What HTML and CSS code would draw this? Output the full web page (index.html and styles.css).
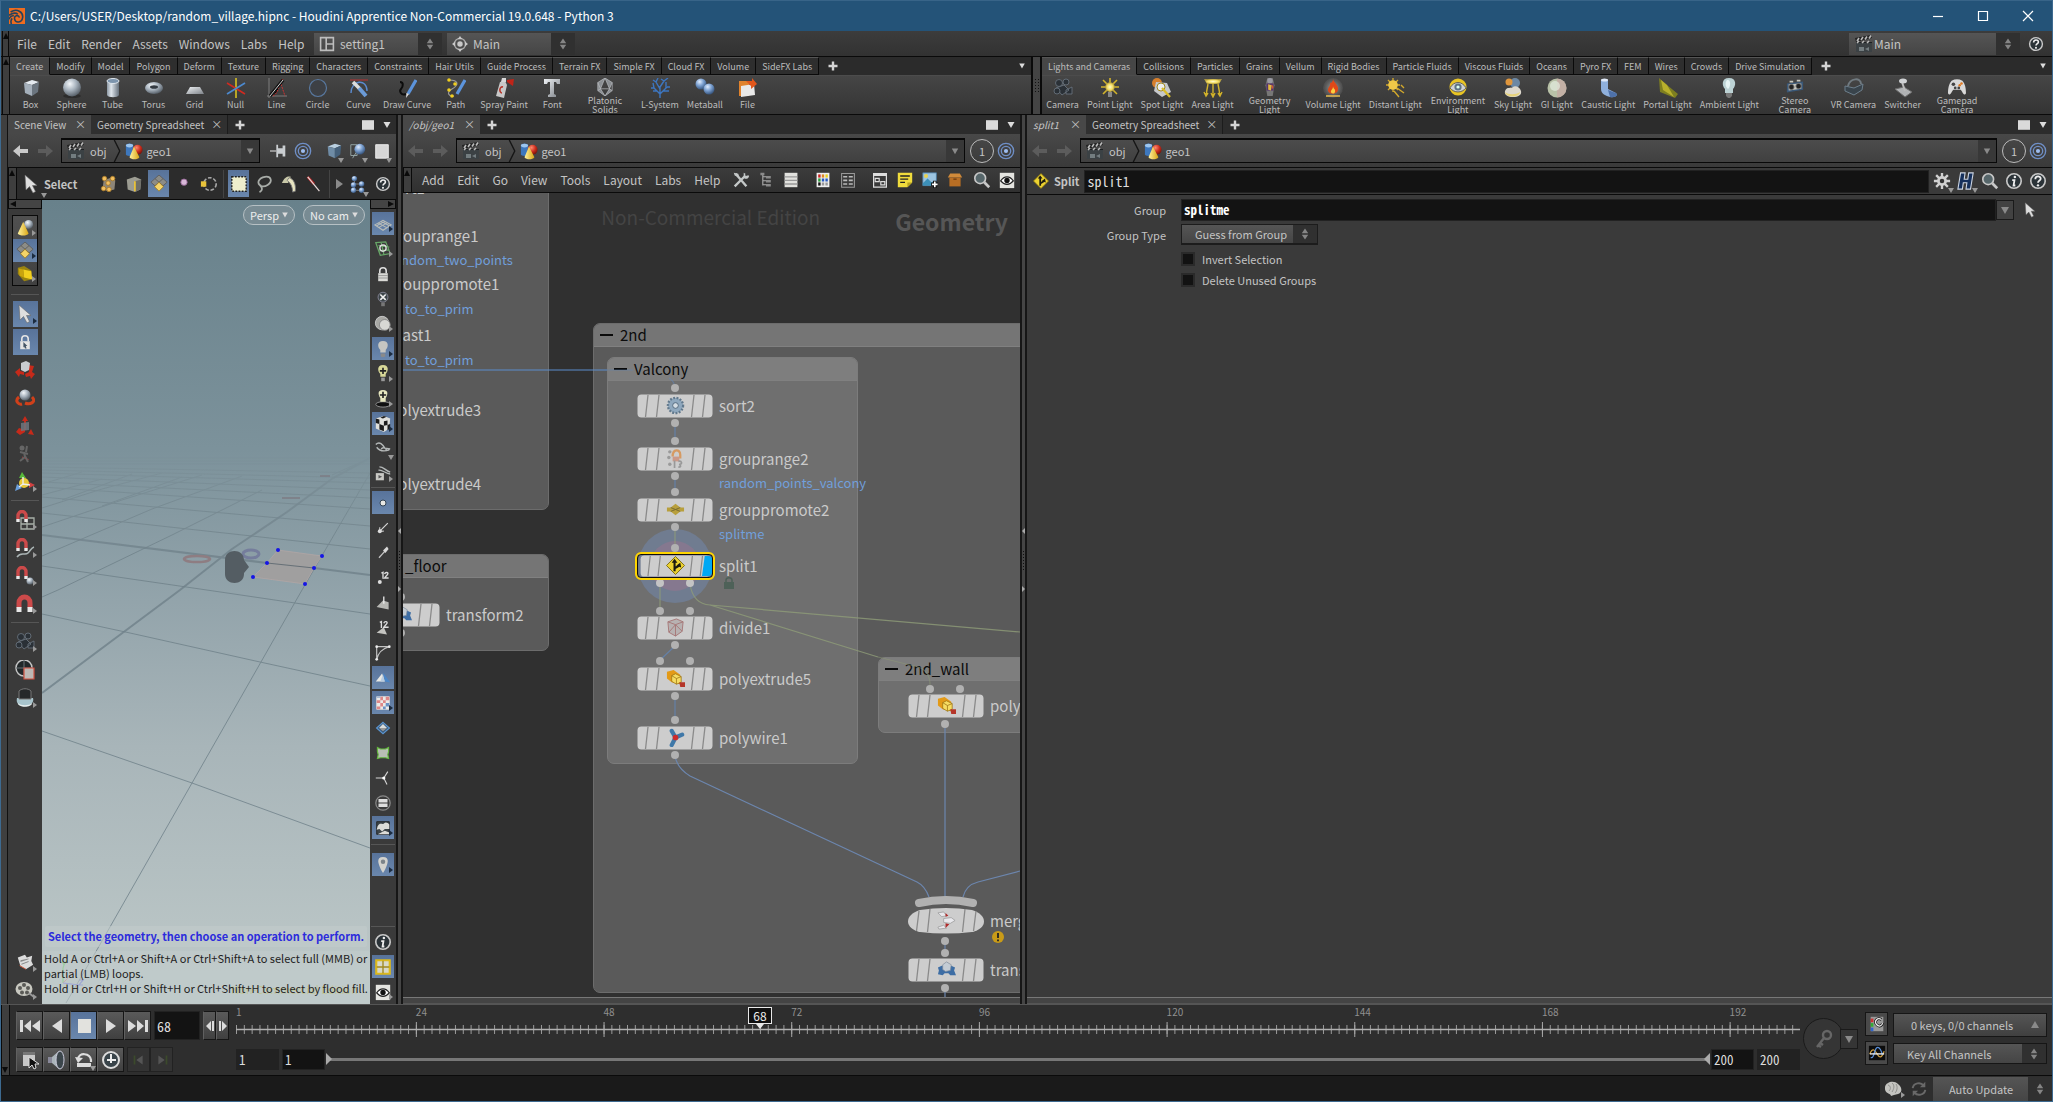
FILE: index.html
```html
<!DOCTYPE html>
<html lang="en">
<head>
<meta charset="utf-8">
<title>C:/Users/USER/Desktop/random_village.hipnc - Houdini Apprentice</title>
<link rel="stylesheet" href="styles.css">
</head>
<body>
<svg class="sprite" width="0" height="0" aria-hidden="true">
<defs>
<linearGradient id="gGrey" x1="0" y1="0" x2="1" y2="1"><stop offset="0" stop-color="#eef1f4"/><stop offset="1" stop-color="#7d8288"/></linearGradient>
<linearGradient id="gSteel" x1="0" y1="0" x2="1" y2="0"><stop offset="0" stop-color="#8b97a3"/><stop offset=".35" stop-color="#dfe6ec"/><stop offset="1" stop-color="#66717c"/></linearGradient>
<radialGradient id="gBall" cx=".38" cy=".3" r=".7"><stop offset="0" stop-color="#f4f8fb"/><stop offset=".5" stop-color="#a9b4bf"/><stop offset="1" stop-color="#5a636c"/></radialGradient>
<radialGradient id="gBlue" cx=".38" cy=".3" r=".7"><stop offset="0" stop-color="#e2eeff"/><stop offset=".5" stop-color="#7ba0d0"/><stop offset="1" stop-color="#38567f"/></radialGradient>
<radialGradient id="gRed" cx=".38" cy=".3" r=".7"><stop offset="0" stop-color="#ff8a70"/><stop offset=".6" stop-color="#c92c1c"/><stop offset="1" stop-color="#7c150c"/></radialGradient>
<linearGradient id="gYel" x1="0" y1="0" x2="1" y2="0"><stop offset="0" stop-color="#fff3a0"/><stop offset="1" stop-color="#d9a514"/></linearGradient>
<radialGradient id="gGlow"><stop offset="0" stop-color="#fffbd0"/><stop offset=".6" stop-color="#f3dd62"/><stop offset="1" stop-color="#a8923c"/></radialGradient>
<radialGradient id="gHalo"><stop offset="0" stop-color="#ddd" stop-opacity=".7"/><stop offset="1" stop-color="#888" stop-opacity=".15"/></radialGradient>
<linearGradient id="gFade" x1="0" y1="0" x2="0" y2="1"><stop offset="0" stop-color="#fff" stop-opacity="0"/><stop offset=".1" stop-color="#fff" stop-opacity=".7"/><stop offset=".2" stop-color="#fff"/></linearGradient>
</defs>

<symbol id="logo" viewBox="0 0 20 20"><path fill="#ef6c1f" d="M0 0h20v20H0z"/><path fill="none" stroke="#26425c" stroke-width="2" d="M2 5c8-5 16 0 15 7s-9 7-10 2 5-6 6-2M0 9c5-3 9-3 11-1M0 14c1-3 4-5 6-4M3 20c-1-3-1-5 1-7"/></symbol>
<symbol id="updown" viewBox="0 0 10 18"><path fill="#858585" d="M5 2l4 6H1zM5 16l4-6H1z"/></symbol>
<symbol id="layout" viewBox="0 0 20 20"><path fill="none" stroke="#bdbdbd" stroke-width="2" d="M2 2h16v16H2zM9 2v16M9 10h9"/></symbol>
<symbol id="radial" viewBox="0 0 20 20"><circle cx="10" cy="10" r="7" fill="none" stroke="#aaa" stroke-width="1.6"/><circle cx="10" cy="10" r="3.4" fill="#c8c8c8"/><path fill="#c8c8c8" d="M10 0l3 4H7zM10 20l3-4H7zM0 10l4-3v6zM20 10l-4-3v6z"/></symbol>
<symbol id="clap" viewBox="0 0 20 20"><path fill="#1d2022" d="M2 8h16v10H2z"/><path fill="#3b4144" d="M2 9h16v9H2z"/><path fill="#222" d="M1 4l16-3 1 3L2 8z"/><path stroke="#bbb" stroke-width="1.6" d="M3 7l2-3M7 6l2-3M11 5.500l2-3M15 4.500l2-3M3 9l2-2M8 9l2-2M13 9l2-2"/><path fill="#737d80" d="M5 13h5v4H5zM11 15l4-2v4z"/></symbol>
<symbol id="help" viewBox="0 0 20 20"><circle cx="10" cy="10" r="8" fill="#2b3338" stroke="#c9c9c9" stroke-width="1.800"/><path fill="none" stroke="#eee" stroke-width="2" d="M7 8c0-4 6-4 6-.5 0 2-3 2-3 4.500"/><circle cx="10" cy="14.800" r="1.300" fill="#eee"/></symbol>
<symbol id="info" viewBox="0 0 20 20"><circle cx="10" cy="10" r="8" fill="#2b3338" stroke="#c9c9c9" stroke-width="1.800"/><circle cx="11" cy="5.500" r="1.400" fill="#eee"/><path fill="none" stroke="#eee" stroke-width="2" d="M8 9h2.500l-1 6h2"/></symbol>
<symbol id="plus" viewBox="0 0 10 10"><path stroke="#d4d4d4" stroke-width="2.400" d="M5 .5v9M.5 5h9"/></symbol>
<symbol id="down" viewBox="0 0 10 10"><path fill="#dcdcdc" d="M1.500 2h7L5 8z"/></symbol>
<symbol id="downdim" viewBox="0 0 10 10"><path fill="#8a8a8a" d="M1 2h8L5 9z"/></symbol>
<symbol id="sq" viewBox="0 0 10 10"><path fill="#dadada" d="M0 1h10v8H0z"/></symbol>
<symbol id="bigsq" viewBox="0 0 20 20"><path fill="#d6d6d6" stroke="#f0f0f0" d="M3 3h14v15H3z"/></symbol>
<symbol id="back" viewBox="0 0 20 20"><path fill="#c9c9c9" d="M2 10l7-6v4h8v4H9v4z"/></symbol>
<symbol id="backdim" viewBox="0 0 20 20"><path fill="#5c5c5c" d="M2 10l7-6v4h8v4H9v4z"/></symbol>
<symbol id="fwddim" viewBox="0 0 20 20"><path fill="#5c5c5c" d="M18 10l-7-6v4H3v4h8v4z"/></symbol>
<symbol id="chev" viewBox="0 0 8 24"><path fill="none" stroke="#151515" stroke-width="1.500" d="M1 0l6 12-6 12"/></symbol>
<symbol id="geo" viewBox="0 0 20 20"><path fill="#3e78bd" d="M1 4c0-3 8-3 8 0v10c0 2-8 2-8 0z"/><ellipse cx="5" cy="4" rx="4" ry="2" fill="#9cc5ee"/><circle cx="14" cy="8.500" r="5.500" fill="url(#gRed)"/><path fill="url(#gYel)" d="M10 5l6 12c-2 3-9 3-11 0z"/></symbol>
<symbol id="pin" viewBox="0 0 20 20"><path stroke="#c4c4c4" stroke-width="1.400" d="M0 10h7"/><path fill="#c9cdd0" d="M7 3h2v4h5V4h3v12h-3v-3H9v4H7z"/></symbol>
<symbol id="target" viewBox="0 0 20 20"><g fill="none" stroke="#6f8fc6" stroke-width="1.500"><circle cx="10" cy="10" r="8.500"/><circle cx="10" cy="10" r="5.200"/></g><circle cx="10" cy="10" r="2.300" fill="#9dbdf0"/></symbol>
<symbol id="cube" viewBox="0 0 20 20"><path fill="#e4eaf0" d="M3 5l8-3 7 2-7 3z"/><path fill="#a4afba" d="M3 5l8 2v11l-7-3z"/><path fill="#6b757f" d="M11 7l7-3-1 10-6 4z"/></symbol>
<symbol id="cubeblue" viewBox="0 0 20 20"><path fill="#b9cfe0" d="M3 5l8-3 7 2-7 3z"/><path fill="#6f8ca6" d="M3 5l8 2v11l-7-3z"/><path fill="#45607a" d="M11 7l7-3-1 10-6 4z"/></symbol>
<symbol id="balls" viewBox="0 0 20 20"><path fill="none" stroke="#9aa" d="M2 3h7v12H2zM4 18l5-8"/><circle cx="12" cy="8" r="6" fill="url(#gBlue)"/></symbol>
<symbol id="cursor" viewBox="0 0 20 20"><path fill="#dedede" stroke="#666" stroke-width=".6" d="M4 1l1 15 3.500-3.500L12 19l2.500-1.500-3-6H16z"/></symbol>
<symbol id="points" viewBox="0 0 20 20"><path fill="#8d8578" d="M4 6l8-3 5 3-1 10-8 2-5-3z"/><g fill="#f3c060" stroke="#a87a2a"><circle cx="5" cy="4" r="2.500"/><circle cx="14" cy="4" r="2.500"/><circle cx="9" cy="9" r="2.500"/><circle cx="4" cy="15" r="2.500"/><circle cx="10" cy="16" r="2.500"/></g></symbol>
<symbol id="edges" viewBox="0 0 20 20"><path fill="#9c9c92" d="M2 5l9-3 7 3-1 11-6 3-8-3z"/><path fill="#6f6f6a" d="M11 7l7-2-1 11-6 3z"/><path stroke="#e8c23a" stroke-width="2" d="M11 7v11"/></symbol>
<symbol id="prims" viewBox="0 0 20 20"><path fill="#8c8c86" stroke="#5c5c5c" d="M10 0l9 8-9 8-9-8zM5.500 4l9 8M14.500 4l-9 8"/><path fill="#f5d468" stroke="#9a7a28" d="M10 8l5 5-5 5-5-5z"/></symbol>
<symbol id="vert" viewBox="0 0 20 20"><circle cx="10" cy="8" r="3.500" fill="#d8b8d8" stroke="#9a6a9a"/></symbol>
<symbol id="detail" viewBox="0 0 20 20"><circle cx="11" cy="10" r="7" fill="none" stroke="#a8a8a8" stroke-width="1.800" stroke-dasharray="4 2"/><path fill="#e8c23a" d="M1 7h6v6H1z"/></symbol>
<symbol id="boxsel" viewBox="0 0 20 20"><path fill="#eeeecc" stroke="#222" stroke-width="1.600" stroke-dasharray="2 1.500" d="M2 2h16v16H2z"/></symbol>
<symbol id="lasso" viewBox="0 0 20 20"><path fill="none" stroke="#a8aca8" stroke-width="2" d="M7 12C1 10 4 3 11 2s9 5 3 9-10-1-8 1 3 5-1 7"/></symbol>
<symbol id="brush" viewBox="0 0 20 20"><path fill="#c8c8a8" d="M2 9C5 2 9 1 12 2l-3 7z"/><path fill="#e8e4c0" stroke="#777" d="M10 3c5 1 8 7 7 15l-3 1c0-6-2-10-6-13z"/></symbol>
<symbol id="laser" viewBox="0 0 20 20"><path stroke="#a22" stroke-width="3" d="M3 2l7 8"/><path stroke="#e6d8d8" stroke-width="1.400" d="M3 2l13 16"/></symbol>
<symbol id="tri" viewBox="0 0 10 10"><path fill="#8a8a8a" d="M2 0l7 5-7 5z"/></symbol>
<symbol id="hier" viewBox="0 0 20 20"><path fill="none" stroke="#888" d="M6 5v12M6 10h8M6 17h8"/><g fill="url(#gBlue)"><circle cx="6" cy="4" r="3"/><circle cx="5" cy="11" r="3"/><circle cx="14" cy="10" r="3"/><circle cx="5" cy="17" r="3"/><circle cx="14" cy="17" r="3"/></g></symbol>

<symbol id="s-sphere" viewBox="0 0 20 20"><ellipse cx="10" cy="18" rx="9" ry="2" fill="#222" opacity=".6"/><circle cx="10" cy="9.500" r="9" fill="url(#gBall)"/></symbol>
<symbol id="s-tube" viewBox="0 0 20 20"><path fill="url(#gSteel)" d="M4 3h12v14c-1 3-11 3-12 0z"/><ellipse cx="10" cy="3" rx="6" ry="2.500" fill="#7d95ad" stroke="#dfe6ec"/></symbol>
<symbol id="s-torus" viewBox="0 0 20 20"><ellipse cx="10" cy="10" rx="9" ry="6" fill="url(#gBall)"/><ellipse cx="10" cy="9" rx="4" ry="1.800" fill="#333a42"/></symbol>
<symbol id="s-grid" viewBox="0 0 20 20"><path fill="url(#gGrey)" d="M5 9h10l4 7H1z"/></symbol>
<symbol id="s-null" viewBox="0 0 20 20"><path stroke="#d8c020" stroke-width="1.600" d="M10 0v20"/><path stroke="#d02a20" stroke-width="1.600" d="M1 5l18 11"/><path stroke="#4c8ad0" stroke-width="1.600" d="M1 16L19 5"/></symbol>
<symbol id="s-line" viewBox="0 0 20 20"><path stroke="#999" stroke-width=".7" d="M2 0v20M0 18h20"/><path stroke="#c33" stroke-dasharray="2 1" d="M6 18c5-3 5-8 10-17M14 6l4 12"/><path stroke="#111" stroke-width="3.400" d="M3 18L16 2"/><path stroke="#ccc" d="M3 18L16 2"/></symbol>
<symbol id="s-circle" viewBox="0 0 20 20"><circle cx="10" cy="10" r="8.500" fill="#3d4045" stroke="#58789f" stroke-width="1.200"/></symbol>
<symbol id="s-curve" viewBox="0 0 20 20"><path fill="none" stroke="#5b8bd0" stroke-width="1.400" d="M2 15C2 2 18 0 18 13"/><path stroke="#b33" d="M1 2h18"/><path stroke="#ddd" stroke-width="3.600" d="M4 4l7 7"/><path stroke="#6b9bd8" stroke-width="4" d="M10 10l7 8"/></symbol>
<symbol id="s-draw" viewBox="0 0 20 20"><path fill="none" stroke="#0c0c0c" stroke-width="2" d="M3 4c4 0 3 5 1 7s0 7 5 5"/><path stroke="#5c94dc" stroke-width="3.200" d="M19 2l-8 14"/><path fill="#ddd" d="M9.500 15l2.500 1-3 4z"/></symbol>
<symbol id="s-path" viewBox="0 0 20 20"><path fill="none" stroke="#999" stroke-width="1.200" d="M3 2c10 0 10 5 3 9s-2 8 2 7"/><path stroke="#5c94dc" stroke-width="3.200" d="M19 2l-8 14"/><g fill="#f0ce20"><circle cx="3" cy="2" r="1.800"/><circle cx="9" cy="6" r="1.800"/><circle cx="3" cy="12" r="1.800"/><circle cx="6" cy="18" r="1.800"/></g></symbol>
<symbol id="s-spray" viewBox="0 0 20 20"><path fill="#c8c8c8" d="M6 4l5-1 2 4-3 13-8-2z"/><path fill="none" stroke="#b8382c" stroke-width="1.600" d="M9 9c-4-1-4 6-1 6"/><path fill="#d8d8d8" d="M8 0h4v4H7z"/><path fill="#c02418" d="M13 2l7-1-1 7-6-4z"/></symbol>
<symbol id="s-font" viewBox="0 0 20 20"><path fill="url(#gGrey)" d="M2 1h16v5h-3l-1-2h-2v12l2 1v2H6v-2l2-1V4H6L5 6H2z"/></symbol>
<symbol id="s-plato" viewBox="0 0 20 20"><path fill="#8a8e92" stroke="#b6babd" stroke-width=".8" d="M10 0l8 5v9l-8 6-8-6V5zM10 0L5 12h10zM2 5l3 7-3 2M18 5l-3 7 3 2M5 12l5 8 5-8"/></symbol>
<symbol id="s-lsys" viewBox="0 0 20 20"><path fill="none" stroke="#3d76c0" stroke-width="1.400" d="M10 20V8M10 16L4 10M10 16l7-7M10 11L6 4M10 9l4-6M4 10H1M4 10L3 5M17 9h3M16 10V4M6 4L3 2M6 4l2-4M14 3l4-3M14 3l-3-2M7 13H3M13 13h6"/></symbol>
<symbol id="s-meta" viewBox="0 0 20 20"><circle cx="6" cy="6" r="5.500" fill="url(#gBlue)"/><circle cx="14" cy="11" r="5.500" fill="url(#gBlue)"/></symbol>
<symbol id="s-file" viewBox="0 0 20 20"><path fill="#e0822c" d="M2 3h8l2 2v13H2z"/><path fill="#e8e8e8" d="M4 8l13-2 1 11-14 2z"/><path fill="#e2571c" d="M9 3l6 0V0l5 6-6 5V8z"/></symbol>
<symbol id="l-cam" viewBox="0 0 20 20"><g fill="#2a3036" stroke="#66707a" stroke-width=".9"><circle cx="6" cy="5" r="3.500"/><circle cx="13" cy="4" r="3"/><path d="M3 10l8-3 5 5-7 5zM13 12l6-3v7l-6 0z"/><circle cx="4" cy="13" r="3"/></g></symbol>
<symbol id="l-point" viewBox="0 0 20 20"><path stroke="#d2b32c" stroke-width="1.600" d="M10 0v19M1 9h18M3 2l14 14M17 2L3 16"/><circle cx="10" cy="9" r="4.800" fill="url(#gGlow)"/><path fill="#888" d="M8 14h4v5H8z"/></symbol>
<symbol id="l-spot" viewBox="0 0 20 20"><circle cx="5" cy="5" r="5" fill="#d77f2c"/><path fill="#c6c8ca" d="M4 4l11 1 4 9-9 5-8-6z"/><circle cx="9" cy="9" r="4" fill="#eee" stroke="#a08820"/><path stroke="#d9bc28" stroke-width="2.200" d="M10 10l8 9"/></symbol>
<symbol id="l-area" viewBox="0 0 20 20"><path fill="url(#gGlow)" d="M1 1h18l-3 5H4z"/><path stroke="#d2b32c" stroke-width="1.400" d="M5 6L3 17M10 6v12M15 6l2 11M1 14l2 4 2-3M8 15l2 4 2-4M15 15l2 3 2-4"/></symbol>
<symbol id="l-geo" viewBox="0 0 20 20"><path fill="#777" d="M7 0h6l2 8-2 12H7L5 8z"/><circle cx="10" cy="3" r="3" fill="#9a9aa4"/><path fill="#54346c" d="M6 6h8v8H6z"/><path fill="#e0b840" d="M8 7l4 1-1 6-3-1z"/><path fill="#cc5a30" d="M12 7l2 3-2 3z"/></symbol>
<symbol id="l-vol" viewBox="0 0 20 20"><circle cx="10" cy="10" r="10" fill="url(#gHalo)"/><path fill="#e04818" d="M10 1c1 4 6 6 5 11s-10 5-10 0c0-3 3-4 2-7 2 0 3-2 3-4z"/><path fill="#f8d040" d="M10 8c0 3 3 3 2 6s-5 1-4-1 2-2 2-5z"/><path stroke="#e8bc50" stroke-width="1.500" d="M3 18h14"/></symbol>
<symbol id="l-dist" viewBox="0 0 20 20"><path stroke="#d2a82c" stroke-width="1.400" d="M8 0v14M1 7h14M3 2l10 10M13 2L3 12M12 10l7 5M9 13l5 6M16 7l3 3"/><circle cx="8" cy="7" r="4.800" fill="#f0c848"/></symbol>
<symbol id="l-env" viewBox="0 0 20 20"><circle cx="10" cy="10" r="9.500" fill="#e8c424"/><path fill="#cfd2d4" stroke="#555" d="M1 11c5-8 13-8 18 0-5 6-13 6-18 0z"/><circle cx="10" cy="10" r="4" fill="#5e7484"/><circle cx="10" cy="10" r="1.800" fill="#dfe"/></symbol>
<symbol id="l-sky" viewBox="0 0 20 20"><circle cx="12" cy="5" r="5" fill="#6c88a4"/><circle cx="6" cy="4" r="3.500" fill="#e0963c"/><path fill="#ddd8cc" d="M2 13c2-5 6-2 8-4s7 0 8 4-3 6-8 6-9-2-8-6z"/><path fill="#e6d27a" d="M2 14c3 3 11 3 15 0-1 6-14 6-15 0z"/></symbol>
<symbol id="l-gi" viewBox="0 0 20 20"><circle cx="10" cy="10" r="9.500" fill="#b9c2a8"/><path fill="#c8a8a4" opacity=".7" d="M10 .5a9.500 9.500 0 010 19z"/><circle cx="8" cy="8" r="5" fill="#e4ece0" opacity=".7"/></symbol>
<symbol id="l-caus" viewBox="0 0 20 20"><path fill="#8fb0dc" d="M3 2h7v9l8 4c3 3-2 5-6 4S3 16 3 11z"/><ellipse cx="6.500" cy="2" rx="3.500" ry="1.500" fill="#dfe9f8"/><path fill="#3d629c" opacity=".8" d="M10 12l8 3c3 3-2 5-6 4z"/></symbol>
<symbol id="l-port" viewBox="0 0 20 20"><path fill="#7d7e20" d="M1 0l8 7 11 9-3 4L2 14z"/><path fill="#b8b02c" d="M3 2l6 5 7 12-11-7z"/></symbol>
<symbol id="l-amb" viewBox="0 0 20 20"><path fill="#bcd2d4" d="M10 0c8 0 7 8 4 11v4H6v-4C3 8 2 0 10 0z"/><path fill="#e6f4f4" d="M8 2c4-1 4 6 1 9-3-2-3-7-1-9z"/><path fill="#777" d="M7 15h6v3l-2 2H9l-2-2z"/></symbol>
<symbol id="l-ster" viewBox="0 0 20 20"><path fill="#3a5878" d="M1 6l18-2v9L1 16z"/><path fill="#c8c8c0" d="M3 7l14-1v6L3 14zM4 3h4v2H4zM12 2h4v2h-4z"/><g fill="#222" stroke="#777"><circle cx="6" cy="10" r="3"/><circle cx="14" cy="9" r="3"/></g></symbol>
<symbol id="l-vr" viewBox="0 0 20 20"><path fill="none" stroke="#707a80" stroke-width="2" d="M4 8c2-8 13-9 13-2"/><path fill="#39444c" stroke="#6d7f8c" d="M1 8l9 2 9-4-1 6-8 5-9-4z"/></symbol>
<symbol id="l-switch" viewBox="0 0 20 20"><path fill="#b0b2b4" stroke="#6a6a6a" d="M2 11l9-2 8 5-7 5z"/><path stroke="#bbb" stroke-width="2" d="M12 13L9 4"/><ellipse cx="10" cy="3" rx="4" ry="2.500" fill="#d0d2d4"/></symbol>
<symbol id="l-pad" viewBox="0 0 20 20"><path fill="#d9d9d9" d="M4 3c4-2 8-2 12 0 3 3 4 9 4 14-2 4-4-2-6-4H6c-2 2-4 8-6 4C0 12 1 6 4 3z"/><g fill="#444"><circle cx="6" cy="7" r="2"/><circle cx="12" cy="11" r="1.500"/><circle cx="8" cy="11" r="1.500"/></g><circle cx="15" cy="6" r="1.400" fill="#e07820"/><circle cx="13" cy="8" r="1.400" fill="#e07820"/></symbol>

<symbol id="conecube" viewBox="0 0 20 20"><circle cx="14" cy="6" r="5" fill="url(#gBall)"/><path fill="url(#gYel)" d="M8 3l6 13c-2 3-10 3-12 0z"/></symbol>
<symbol id="goldcube" viewBox="0 0 20 20"><path fill="#9a8410" d="M2 3l7-2 8 5v10l-8 2-7-8z"/><path fill="#f1cf1e" d="M8 5l9 2 1 9-9-2z"/><path fill="#c9a40e" d="M8 5l1 9-5-2L3 4z"/></symbol>
<symbol id="lockarrow" viewBox="0 0 20 20"><path fill="none" stroke="#e4e4e4" stroke-width="2" d="M6 9V6c0-5 8-5 8 0v3"/><path fill="#e4e4e4" d="M4 9h12v10H4z"/><path fill="#456" d="M8 10l5 5-2 0 1 3-2 0-1-2-1 1z"/></symbol>
<symbol id="move" viewBox="0 0 20 20"><path fill="#c62a1a" d="M0 12l5-4v3l4 1v3l-4-1-1 3zM20 14l-6-4v2l-4 2 1 3 4-1 1 3zM19 6l-6-1-2 3 6 4z"/><path fill="#c8ccd0" d="M6 3l5-2 4 2-1 7-4 2-4-2z"/></symbol>
<symbol id="rotate" viewBox="0 0 20 20"><path fill="none" stroke="#d0401a" stroke-width="3" d="M4 9c-5 4 0 8 3 7M17 9c5 5-2 8-7 6"/><circle cx="10" cy="7" r="5.500" fill="url(#gBall)"/></symbol>
<symbol id="scale" viewBox="0 0 20 20"><path fill="#c62a1a" d="M10 0l3 5h-2v9H9V5H7zM1 16l3-4 6 2v2l-5 3zM19 19l-6-1 3-5z"/><path fill="#6d767e" opacity=".85" d="M6 7l8-1v8l-8 1z"/></symbol>
<symbol id="pose" viewBox="0 0 20 20"><circle cx="7" cy="4" r="2.500" fill="#666"/><path fill="none" stroke="#646464" stroke-width="2" d="M5 8l8 2M9 8l1 5-5 4M10 12l3 6M12 2l-1 6"/><path stroke="#a44" stroke-dasharray="1 2" d="M7 13l8 3"/></symbol>
<symbol id="handles" viewBox="0 0 20 20"><circle cx="9" cy="11" r="5" fill="#e8c838"/><path fill="#58b83a" d="M7 0l4 6H4z"/><path fill="#d04040" d="M20 13l-6 3v-6z"/><path fill="#6ba0dc" d="M0 19l2-7 5 4z"/><path stroke="#eee" stroke-width="1.400" d="M8 12V5M8 12l7 1M8 12l-4 3"/></symbol>
<symbol id="magnet" viewBox="0 0 20 20"><path fill="none" stroke="#cc4a4a" stroke-width="5" d="M4 14V9C4 1 15 1 15 9v5"/><path fill="#e8e8e8" d="M1.500 13h5v5h-5zM12.500 13h5v5h-5z"/></symbol>
<symbol id="maggrid" viewBox="0 0 20 20"><path fill="none" stroke="#a8b0a8" stroke-width="1.300" d="M6 8h13v11H6zM12 8v11M6 14h13"/><path fill="none" stroke="#cc4a4a" stroke-width="3.400" d="M3 9V6c0-6 8-6 8 0v3"/><path fill="#e8e8e8" d="M1.300 9h3.400v3H1.300zM9.300 9h3.400v3H9.300z"/></symbol>
<symbol id="magcurve" viewBox="0 0 20 20"><path fill="none" stroke="#aab4b4" stroke-width="1.500" d="M2 19c4-6 8-1 11-4s3-5 6-6"/><path fill="none" stroke="#cc4a4a" stroke-width="3.400" d="M3 10V6c0-6 8-6 8 0v4"/><path fill="#e8e8e8" d="M1.300 10h3.400v3H1.300zM9.300 10h3.400v3H9.300z"/></symbol>
<symbol id="magpt" viewBox="0 0 20 20"><circle cx="15" cy="15" r="3.500" fill="url(#gBall)"/><path fill="none" stroke="#cc4a4a" stroke-width="3.400" d="M3 10V6c0-6 8-6 8 0v4"/><path fill="#e8e8e8" d="M1.300 10h3.400v3H1.300zM9.300 10h3.400v3H9.300z"/></symbol>
<symbol id="render" viewBox="0 0 20 20"><circle cx="9" cy="8" r="8" fill="#22282a" stroke="#c4c4c4" stroke-width="1.500"/><path fill="none" stroke="#6a7276" d="M9 0v16M1 8h16"/><path fill="#bdb8b4" stroke="#d05040" stroke-width="1.200" d="M9 8h10v11H9z"/></symbol>
<symbol id="flip" viewBox="0 0 20 20"><path fill="#a8c4cc" d="M2 10h16c3 10-19 12-16 0z"/><path fill="#e6eeee" d="M3 15c3 3 11 3 14 0 0 5-14 5-14 0z"/><path fill="#26282a" stroke="#777" d="M4 3c3-3 9-3 12 0v8H4z"/></symbol>
<symbol id="snap" viewBox="0 0 20 20"><path fill="#dcdcdc" d="M2 5l8-3 2 3 6-2-1 6 2 4-8 5-6-3z"/><path fill="#888" d="M5 8l9-2v1l-9 3zM6 12l8-3v1l-8 3z"/><path stroke="#c84a2a" d="M4 14l7 4"/></symbol>
<symbol id="reel" viewBox="0 0 20 20"><ellipse cx="9" cy="9" rx="8.500" ry="7" fill="#c8c8c0"/><g fill="#5a5a56"><circle cx="9" cy="5" r="2"/><circle cx="5" cy="8" r="2"/><circle cx="13" cy="8" r="2"/><circle cx="7" cy="12.500" r="2"/><circle cx="12" cy="12.500" r="2"/></g><path stroke="#999" stroke-width="2" d="M14 13l5 4"/></symbol>
<symbol id="gridplane" viewBox="0 0 20 20"><path fill="none" stroke="#b8bcb8" stroke-width="1.200" d="M1 11l9-5 9 5-9 6zM5 9l9 5M14 9l-9 5M8 7l9 5M12 7l-9 5"/></symbol>
<symbol id="refplane" viewBox="0 0 20 20"><path fill="none" stroke="#67a667" stroke-width="1.400" d="M2 3l11-1 5 13-11 2zM5 6l12 2M6 12l10-1M8 3l3 13"/><circle cx="10" cy="9" r="3.500" fill="none" stroke="#ddd" stroke-width="1.500"/></symbol>
<symbol id="padlock" viewBox="0 0 20 20"><path fill="none" stroke="#ddd" stroke-width="2" d="M6 9V6c0-5 8-5 8 0v3"/><path fill="#dadad6" d="M4 9h12v10H4z"/><path stroke="#888" d="M4 12h12M4 15h12"/></symbol>
<symbol id="bulboff" viewBox="0 0 20 20"><circle cx="10" cy="8" r="5.500" fill="#3c4448" stroke="#889"/><path stroke="#eee" stroke-width="1.800" d="M7 5l6 6M13 5l-6 6"/><path fill="#777" d="M8 14h4v4H8z"/></symbol>
<symbol id="disks" viewBox="0 0 20 20"><circle cx="9" cy="9" r="7.500" fill="#a8a8a4" stroke="#ccc"/><circle cx="12" cy="11" r="6" fill="#d8d8d4" stroke="#888"/></symbol>
<symbol id="bulb" viewBox="0 0 20 20"><path fill="#c6c6c2" d="M10 1c7 0 6 7 3 10v3H7v-3C4 8 3 1 10 1z"/><path fill="#8a8a8a" d="M7.500 15h5v3l-1 1h-3l-1-1z"/></symbol>
<symbol id="bulbplus" viewBox="0 0 20 20"><path fill="#d8d898" d="M10 0c7 0 6 7 3 10v3H7v-3C4 7 3 0 10 0z"/><path stroke="#222" stroke-width="1.800" d="M10 3v7M6.500 6.500h7"/><path fill="#999" d="M8 14h4v4H8z"/></symbol>
<symbol id="bulbshadow" viewBox="0 0 20 20"><ellipse cx="10" cy="16" rx="8" ry="3" fill="#111" stroke="#999"/><path fill="#e8e8c0" d="M10 0c7 0 5 6 3 9v4H7V9C5 6 3 0 10 0z"/><path stroke="#222" stroke-width="1.800" d="M10 2v7M6.500 5.500h7"/></symbol>
<symbol id="checker" viewBox="0 0 20 20"><path fill="#e0e0dc" d="M2 4l9-3 7 3-1 11-6 4-9-4z"/><path fill="#1c1c1c" d="M2 4l4 1v5L2 9zM11 7l4-1v5l-4 1zM6 10l5 2v6l-5-2zM7 3l4-2 3 1-4 2zM15 11l3-1v5l-3 2z"/></symbol>
<symbol id="specs" viewBox="0 0 20 20"><path fill="none" stroke="#b4b8b8" stroke-width="1.600" d="M2 5c4-4 8 0 10 4l6 1M3 8c3 4 8 5 14 3M8 10c2-2 4-2 6 1"/></symbol>
<symbol id="specs2" viewBox="0 0 20 20"><path fill="none" stroke="#b4b8b8" stroke-width="1.500" d="M6 2c5 0 6 4 12 6M5 6c3-2 8 4 13 4"/><path fill="#c8c8c4" d="M2 9h9v8H2z"/><path fill="#555" d="M5 11l4 2-4 2z"/></symbol>
<symbol id="dot" viewBox="0 0 20 20"><circle cx="10" cy="10" r="3" fill="#e8e8e4" stroke="#345"/></symbol>
<symbol id="norm" viewBox="0 0 20 20"><path stroke="#d4d4d4" stroke-width="1.500" d="M16 4l-9 9M6 9v5h5"/><circle cx="6" cy="14" r="2.500" fill="#ddd"/></symbol>
<symbol id="pick" viewBox="0 0 20 20"><path stroke="#c4c4c4" stroke-width="1.600" d="M5 16l8-9"/><path fill="#d8d8d8" d="M10 7l5-5 2 3-4 5z"/></symbol>
<symbol id="num" viewBox="0 0 20 20"><circle cx="6" cy="15" r="2.500" fill="#ddd"/><path fill="none" stroke="#ddd" stroke-width="1.700" d="M8 4l2-1v8M12 5c1-3 5-2 4 0s-3 3-4 5h5"/></symbol>
<symbol id="primn" viewBox="0 0 20 20"><path fill="#b8b8b4" d="M2 15L10 7l7 2v9z"/><path stroke="#eee" stroke-width="1.600" d="M11 11V2"/></symbol>
<symbol id="primnum" viewBox="0 0 20 20"><path fill="#c4c4c0" d="M2 16L11 9l4 9z"/><path fill="none" stroke="#ddd" stroke-width="1.700" d="M6 3l2-1v8M11 4c1-3 5-2 4 0s-3 3-4 5h6"/></symbol>
<symbol id="bound" viewBox="0 0 20 20"><path fill="none" stroke="#c4c4c4" stroke-width="1.300" d="M3 17V3h14M3 17c2-8 6-12 14-14"/><g fill="#eee"><circle cx="3" cy="3" r="1.500"/><circle cx="17" cy="3" r="1.500"/><circle cx="3" cy="17" r="1.500"/></g></symbol>
<symbol id="backf" viewBox="0 0 20 20"><path fill="#e8e8e4" d="M2 14L9 5l3 9z"/><path fill="#4a86c8" d="M10 4l8 11-6-1z"/><path fill="#b8cce0" d="M10 6l2 8-5 0z"/></symbol>
<symbol id="uvcheck" viewBox="0 0 20 20"><path fill="#eceae8" stroke="#ddd" d="M3 3h14v14H3z"/><path fill="#d88" d="M7 3h3v4H7zM13 3h4v4h-4zM3 7h4v3H3zM10 7h3v3h-3zM7 10h3v4H7zM3 14h4v3H3z"/><path fill="#6a92c4" d="M13 10h4v4h-4zM10 14h3v3h-3zM3 3h4v1H3z"/></symbol>
<symbol id="diam" viewBox="0 0 20 20"><path fill="#3c5a78" stroke="#5a94d0" stroke-width="1.500" d="M10 3l8 7-8 7-8-7z"/><path fill="#d8dcdc" d="M10 5l5 5H5z"/><path fill="#999" d="M5 10h10l-5 4z"/></symbol>
<symbol id="hull" viewBox="0 0 20 20"><path fill="#b8beb4" stroke="#62b83c" stroke-width="1.400" d="M3 3l4 2h6l4-2v5l-1 4 1 5-4-1H7l-4 1 1-5-1-4z"/></symbol>
<symbol id="axis" viewBox="0 0 20 20"><path stroke="#d4d4d4" stroke-width="1.400" d="M1 10h10M11 10l5-8M11 10l4 8"/><circle cx="11" cy="10" r="2" fill="#fff"/></symbol>
<symbol id="eqc" viewBox="0 0 20 20"><circle cx="10" cy="10" r="8" fill="none" stroke="#888" stroke-width="1.400"/><path stroke="#ddd" stroke-width="4" d="M5 7.500h10M5 12.500h10"/></symbol>
<symbol id="photo" viewBox="0 0 20 20"><path fill="#3c4448" stroke="#222" d="M3 3h14v14H3z"/><path fill="#dcdcd8" d="M4 8c3-5 5-1 7-3s4-1 6 1v5l-5 0-3 3-3-3-3 1zM4 17l4-2 4-2 5 2v2z"/></symbol>
<symbol id="mappin" viewBox="0 0 20 20"><path fill="#d2d2ce" d="M10 1c8 0 6 8 0 18C4 9 2 1 10 1z"/><circle cx="10" cy="6.500" r="2.500" fill="#7c848a"/></symbol>
<symbol id="quad" viewBox="0 0 20 20"><path fill="#d8d8c8" stroke="#dcb91c" stroke-width="2.400" d="M2.500 2.500h15v15h-15z"/><path stroke="#a08820" stroke-width="1.500" d="M10 3v14M3 10h14"/></symbol>
<symbol id="eye" viewBox="0 0 20 20"><path fill="#e4e4e0" d="M2 2h16v17H2z"/><path fill="#fff" stroke="#222" stroke-width="1.400" d="M3 11c4-6 10-6 14 0-4 5-10 5-14 0z"/><circle cx="10" cy="10.500" r="3" fill="#111"/></symbol>

<symbol id="tools" viewBox="0 0 20 20"><path stroke="#c4c8c8" stroke-width="2.600" d="M3 17L15 5M4 3l12 14"/><path fill="#c4c8c8" d="M13 2l2 1-1 3 3-1 2 0c0 4-5 5-6 2zM2 2l5 1 1 4-5-2z"/></symbol>
<symbol id="tree" viewBox="0 0 20 20"><path fill="none" stroke="#aaa" stroke-width="1.400" d="M6 2v15M6 6h5M6 11h5M6 16h5"/><path fill="#8a8a8a" d="M3 1h5v3H3zM10 5h6v3h-6zM10 10h6v3h-6zM10 15h6v3h-6z"/></symbol>
<symbol id="list" viewBox="0 0 20 20"><path fill="#e2e2de" d="M2 1h16v18H2z"/><path stroke="#999" stroke-width="1.600" d="M2 6h16M2 10.500h16M2 15h16"/></symbol>
<symbol id="palette" viewBox="0 0 20 20"><path fill="#efefef" d="M2 1h16v18H2z"/><path fill="#c82020" d="M4 3h3v4H4z"/><path fill="#e08a20" d="M8.500 3h3v4h-3z"/><path fill="#e8d020" d="M13 3h3v4h-3z"/><path fill="#2a9a3a" d="M4 8h3v4H4z"/><path fill="#285ac0" d="M8.500 8h3v4h-3zM13 8h3v4h-3z"/><path fill="#111" d="M4 13h3v4H4z"/><path fill="#999" d="M8.500 13h3v4h-3zM13 13h3v4h-3z"/></symbol>
<symbol id="listgrid" viewBox="0 0 20 20"><path fill="#3a3a3a" stroke="#999" stroke-width="1.300" d="M2 2h16v17H2z"/><path stroke="#bbb" stroke-width="2" d="M4 6h5M11 6h5M4 10.500h5M11 10.500h5M4 15h5M11 15h5"/></symbol>
<symbol id="netbox" viewBox="0 0 20 20"><path fill="#3a3a3a" stroke="#ddd" stroke-width="1.500" d="M2 2h16v17H2z"/><path fill="#ddd" d="M2 2h16v3H2z"/><path fill="none" stroke="#ddd" stroke-width="1.500" d="M4 8h5v4H4zM11 12h5v4h-5z"/></symbol>
<symbol id="note" viewBox="0 0 20 20"><path fill="#f0dc3c" d="M1 1h18v12l-6 6H1z"/><path fill="#b8a420" d="M13 19v-6h6z"/><path stroke="#222" stroke-width="1.600" d="M4 5h12M4 9h10M4 13h6"/></symbol>
<symbol id="image" viewBox="0 0 20 20"><path fill="#9cc4e0" stroke="#4878a0" d="M1 1h17v16H1z"/><circle cx="5" cy="5" r="2.500" fill="#e8d050"/><path fill="#3c90b8" d="M1 14l6-6 5 5 3-2 3 4v2H1z"/><path stroke="#111" stroke-width="4.500" d="M16 11v9M11.500 15.500h9"/><path stroke="#fff" stroke-width="2" d="M16 12v7M12.500 15.500h7"/></symbol>
<symbol id="crate" viewBox="0 0 20 20"><path fill="#d08a3a" d="M1 7l3-5h12l3 5z"/><path fill="#b86e24" d="M3 7h14v11H3z"/><path fill="#7c4410" d="M8 8h4v2H8z"/></symbol>
<symbol id="search" viewBox="0 0 20 20"><circle cx="8" cy="8" r="6" fill="#56666a" stroke="#c8c8c8" stroke-width="1.800"/><path stroke="#c8c8c8" stroke-width="3" d="M12.500 12.500L18 18"/></symbol>
<symbol id="splitic" viewBox="0 0 20 20"><path fill="#ecd231" stroke="#7d6b10" d="M10 .5l9.500 9.500-9.500 9.500L.5 10z"/><path fill="none" stroke="#1a1a10" stroke-width="2.200" d="M9 16V6M9 13l5-3"/><path fill="#1a1a10" d="M9 3l3 4H6zM15 7l1 5-5-2z"/></symbol>
<symbol id="gear" viewBox="0 0 20 20"><path stroke="#d0d0d0" stroke-width="2.600" d="M10 1v18M1 10h18M3.500 3.500l13 13M16.500 3.500l-13 13"/><circle cx="10" cy="10" r="5.500" fill="#d0d0d0"/><circle cx="10" cy="10" r="2.500" fill="#333"/></symbol>
<symbol id="hbrand" viewBox="0 0 20 20"><path fill="#15305c" stroke="#cdd6e4" stroke-width="1.200" d="M4 1h5L8 8h4l1-7h5l-3 18h-5l1-7H7l-1 7H1z"/></symbol>

<symbol id="nodebody" viewBox="0 0 76 24"><rect x=".5" y=".5" width="75" height="23" rx="4" fill="#cdcdcd"/><path stroke="#8a8a8a" stroke-width="1.300" d="M11 1L8.500 23M22 1l-2.500 22M57 1l-2.500 22M68 1l-2.500 22"/></symbol>
<symbol id="mergebody" viewBox="0 0 76 38"><path fill="none" stroke="#b1b1b1" stroke-width="8" stroke-linecap="round" d="M11 7q27-6 54 0"/><path fill="#cdcdcd" d="M12 14q26-4 52 0c16 5 16 18 0 22q-26 3-52 0c-16-4-16-17 0-22z"/><path stroke="#8a8a8a" stroke-width="1.300" d="M11 15L8.500 35M22 13l-2.500 23M57 13l-2.500 23M68 15l-2.500 20"/></symbol>
<symbol id="n-sort" viewBox="0 0 20 20"><circle cx="10" cy="10" r="8" fill="#8fa8be" stroke="#61788c" stroke-width="2.400" stroke-dasharray="2 1.500"/><circle cx="10" cy="10" r="3" fill="#d4dde4" stroke="#52687c"/></symbol>
<symbol id="n-range" viewBox="0 0 20 20"><path fill="none" stroke="#d69a62" stroke-width="2.400" d="M7 8c0-9 8-8 8-2v4"/><g fill="#9a9a9a"><circle cx="4" cy="3" r="1.800"/><circle cx="3" cy="9" r="1.800"/><circle cx="4" cy="16" r="1.800"/></g><path fill="#c98" d="M7 8h7v5H7z"/><path fill="none" stroke="#999" stroke-width="1.800" d="M9 12v8M13 13c4-1 4 3 2 3s3 3-2 3"/></symbol>
<symbol id="n-promo" viewBox="0 0 20 20"><path fill="#b89f3c" d="M1 8h4l5-4 5 4h4v4h-4l-5 4-5-4H1z"/><path stroke="#776a30" d="M5 8l10 4M15 8L5 12"/></symbol>
<symbol id="n-div" viewBox="0 0 20 20"><path fill="#b8b2b2" stroke="#a67878" d="M2 4l9-3 7 3-1 10-7 5-7-4zM2 4l8 3v12M10 7l8-3M3 15l7-8 7 7"/></symbol>
<symbol id="n-poly" viewBox="0 0 20 20"><path fill="#e39a17" d="M1 3l7-2 7 5v10L6 14 1 10z"/><path fill="#f6dc62" stroke="#997012" stroke-width=".8" d="M6 7l4-2 6 3v6l-5 2-5-3zM6 7l5 3v6M11 10l5-2"/><path fill="#b5362a" d="M14 14l6 0v5l-5 0z"/></symbol>
<symbol id="n-wire" viewBox="0 0 20 20"><path stroke="#3f78a8" stroke-width="4.400" stroke-linecap="round" d="M6 3l4 7M10 10l7-3M10 10l-4 8"/><circle cx="10" cy="10" r="3" fill="#cc2c2c"/></symbol>
<symbol id="n-merge" viewBox="0 0 20 20"><path fill="#e8e8ec" stroke="#888" stroke-width=".6" d="M1 2l6-1 3 4-5 1zM7 8l8-1 4 3-5 3-7-1zM1 17l6-2 3 3-8 1z"/><path fill="#b02a2a" d="M9 2l3 3-3 1zM9 13l4 1-4 4z"/></symbol>
<symbol id="n-xform" viewBox="0 0 20 20"><path fill="#3d6da4" d="M1 8l4-2h10l4 2-1 3 2 5-6 0-2-2h-4l-2 2-5-1 1-4z"/><path fill="#c4ccd4" stroke="#7d8a98" stroke-width=".7" d="M6 5l4-3 5 3-1 6-5 1-3-2z"/></symbol>

<symbol id="pb-first" viewBox="0 0 24 20"><path fill="#dcdcdc" d="M2 4h3v12H2zM13 4v12l-7-6zM22 4v12l-8-6z"/></symbol>
<symbol id="pb-back" viewBox="0 0 24 20"><path fill="#dcdcdc" d="M17 3v14L7 10z"/></symbol>
<symbol id="pb-stop" viewBox="0 0 24 20"><path fill="#e2e2de" d="M6 3h13v14H6z"/></symbol>
<symbol id="pb-play" viewBox="0 0 24 20"><path fill="#dcdcdc" d="M7 3v14l10-7z"/></symbol>
<symbol id="pb-last" viewBox="0 0 24 20"><path fill="#dcdcdc" d="M22 4h-3v12h3zM11 4v12l7-6zM2 4v12l8-6z"/></symbol>
<symbol id="pb-sb" viewBox="0 0 12 20"><path fill="#dcdcdc" d="M7 5v10l-5-5zM8 5h2v10H8z"/></symbol>
<symbol id="pb-sf" viewBox="0 0 12 20"><path fill="#dcdcdc" d="M5 5v10l5-5zM2 5h2v10H2z"/></symbol>
<symbol id="rt" viewBox="0 0 20 20"><path fill="#c8c8c8" d="M3 2h12v14H3z"/><path fill="#777" d="M3 2h12v3H3z"/><path fill="#111" stroke="#ddd" d="M9 7v11l3-3 2 4 2-1-1-4h4z"/></symbol>
<symbol id="audio" viewBox="0 0 20 20"><path fill="#889" d="M1 7h4v6H1z"/><path fill="#aab4ba" d="M5 7l7-6v18l-7-6z"/><ellipse cx="13" cy="10" rx="4" ry="9" fill="#3c464c" stroke="#ccd"/></symbol>
<symbol id="loop" viewBox="0 0 20 20"><path fill="none" stroke="#ddd" stroke-width="2.200" d="M4 9c1-7 12-6 13 1v2"/><path fill="#ddd" d="M1 7l8 1-5 5zM3 13h14v4H3z"/></symbol>
<symbol id="clock" viewBox="0 0 20 20"><circle cx="10" cy="10" r="8" fill="#39444a" stroke="#ddd" stroke-width="2"/><path stroke="#eee" stroke-width="2" d="M10 4v9M6 10h9"/></symbol>
<symbol id="keyprev" viewBox="0 0 20 20"><path fill="#3c4a2c" d="M4 5h2v10H4z"/><path fill="#555" d="M14 5v10l-7-5z"/></symbol>
<symbol id="keynext" viewBox="0 0 20 20"><path fill="#3c4a2c" d="M14 5h2v10h-2z"/><path fill="#555" d="M6 5v10l7-5z"/></symbol>
<symbol id="key" viewBox="0 0 20 20"><circle cx="13" cy="6" r="4" fill="none" stroke="#666" stroke-width="2.400"/><path stroke="#666" stroke-width="2.400" d="M10 9l-7 9M6 14l3 2M4 16l3 2"/></symbol>
<symbol id="scope" viewBox="0 0 20 20"><path fill="#999" d="M3 2h14v16H3z"/><path fill="#c33" d="M3 4h3v4H3z"/><path fill="#3a3" d="M3 9h3v4H3z"/><path fill="#36c" d="M3 14h3v4H3z"/><path fill="none" stroke="#111" stroke-width="3" d="M15 5c-5-3-8 2-6 5 3 4 7 2 7-1"/><path fill="none" stroke="#eee" stroke-width="1.400" d="M15 5c-5-3-8 2-6 5 3 4 7 2 7-1"/></symbol>
<symbol id="wave" viewBox="0 0 20 20"><path fill="#0c0c0c" d="M1 2h18v16H1z"/><path fill="none" stroke="#d0a040" stroke-width="1.400" d="M2 11c3-7 5-5 8 0s5 5 8-3"/><path fill="none" stroke="#5a90d8" stroke-width="1.400" d="M3 15c4 2 4-10 7-11s5 4 6 8"/><path stroke="#eee" stroke-width="1.500" d="M2 11h16"/></symbol>
<symbol id="brain" viewBox="0 0 20 20"><path fill="#c4c4c0" d="M2 8c1-5 9-7 13-3 5 4 4 9 0 10l-4 1-3 1c0-3-7-2-6-9z"/><path fill="none" stroke="#8f8f8b" d="M5 6c3 1 3 4 1 6M9 4c3 2 2 6 0 9M13 5c2 3 1 7-1 9"/></symbol>
<symbol id="refresh" viewBox="0 0 20 20"><path fill="none" stroke="#696969" stroke-width="2.200" d="M3 9c1-6 9-7 12-3M17 11c-1 6-9 7-12 3"/><path fill="#696969" d="M17 2v6h-6zM3 18v-6h6z"/></symbol>
</svg>

<div class="window">
<header class="titlebar">
  <svg class="i16"><use href="#logo"/></svg>
  <h1>C:/Users/USER/Desktop/random_village.hipnc - Houdini Apprentice Non-Commercial 19.0.648 - Python 3</h1>
  <div class="winbtns">
    <button aria-label="Minimize"><svg viewBox="0 0 12 12"><path d="M1 6.500h10"/></svg></button>
    <button aria-label="Maximize"><svg viewBox="0 0 12 12"><path d="M1.500 1.500h9v9h-9z"/></svg></button>
    <button aria-label="Close"><svg viewBox="0 0 12 12"><path d="M1 1l10 10M11 1L1 11"/></svg></button>
  </div>
</header>

<div class="menubar">
  <button class="strip top" aria-label="Collapse menu"></button>
  <nav class="menu"><button>File</button><button>Edit</button><button>Render</button><button>Assets</button><button>Windows</button><button>Labs</button><button>Help</button></nav>
  <div class="combo desk"><svg class="i16"><use href="#layout"/></svg><select aria-label="Desktop"><option>setting1</option></select><span class="spin"><svg><use href="#updown"/></svg></span></div>
  <div class="combo desk"><svg class="i16"><use href="#radial"/></svg><select aria-label="Radial menu"><option>Main</option></select><span class="spin"><svg><use href="#updown"/></svg></span></div>
  <div class="combo take"><svg class="i20"><use href="#clap"/></svg><select aria-label="Take"><option>Main</option></select><span class="spin"><svg><use href="#updown"/></svg></span></div>
  <button class="ib helpbtn" aria-label="Help"><svg class="i16"><use href="#help"/></svg></button>
</div>

<div class="shelves">
  <button class="strip top" aria-label="Collapse shelf"></button>
  <section class="shelf">
    <div class="stabs"><button class="on">Create</button><button>Modify</button><button>Model</button><button>Polygon</button><button>Deform</button><button>Texture</button><button>Rigging</button><button>Characters</button><button>Constraints</button><button>Hair Utils</button><button>Guide Process</button><button>Terrain FX</button><button>Simple FX</button><button>Cloud FX</button><button>Volume</button><button>SideFX Labs</button><button class="add" aria-label="Add shelf"><svg class="i10"><use href="#plus"/></svg></button><button class="more" aria-label="Shelf menu"><svg class="i8"><use href="#down"/></svg></button></div>
    <div class="stools">
      <button><svg><use href="#cube"/></svg>Box</button><button><svg><use href="#s-sphere"/></svg>Sphere</button><button><svg><use href="#s-tube"/></svg>Tube</button><button><svg><use href="#s-torus"/></svg>Torus</button><button><svg><use href="#s-grid"/></svg>Grid</button><button><svg><use href="#s-null"/></svg>Null</button><button><svg><use href="#s-line"/></svg>Line</button><button><svg><use href="#s-circle"/></svg>Circle</button><button><svg><use href="#s-curve"/></svg>Curve</button><button><svg><use href="#s-draw"/></svg>Draw Curve</button><button><svg><use href="#s-path"/></svg>Path</button><button><svg><use href="#s-spray"/></svg>Spray Paint</button><button><svg><use href="#s-font"/></svg>Font</button><button class="two"><svg><use href="#s-plato"/></svg><span>Platonic<br>Solids</span></button><button><svg><use href="#s-lsys"/></svg>L-System</button><button><svg><use href="#s-meta"/></svg>Metaball</button><button><svg><use href="#s-file"/></svg>File</button>
    </div>
  </section>
  <div class="vgrip"><i></i></div>
  <section class="shelf">
    <div class="stabs"><button class="on">Lights and Cameras</button><button>Collisions</button><button>Particles</button><button>Grains</button><button>Vellum</button><button>Rigid Bodies</button><button>Particle Fluids</button><button>Viscous Fluids</button><button>Oceans</button><button>Pyro FX</button><button>FEM</button><button>Wires</button><button>Crowds</button><button>Drive Simulation</button><button class="add" aria-label="Add shelf"><svg class="i10"><use href="#plus"/></svg></button><button class="more" aria-label="Shelf menu"><svg class="i8"><use href="#down"/></svg></button></div>
    <div class="stools">
      <button><svg><use href="#l-cam"/></svg>Camera</button><button><svg><use href="#l-point"/></svg>Point Light</button><button><svg><use href="#l-spot"/></svg>Spot Light</button><button><svg><use href="#l-area"/></svg>Area Light</button><button class="two"><svg><use href="#l-geo"/></svg><span>Geometry<br>Light</span></button><button><svg><use href="#l-vol"/></svg>Volume Light</button><button><svg><use href="#l-dist"/></svg>Distant Light</button><button class="two"><svg><use href="#l-env"/></svg><span>Environment<br>Light</span></button><button><svg><use href="#l-sky"/></svg>Sky Light</button><button><svg><use href="#l-gi"/></svg>GI Light</button><button><svg><use href="#l-caus"/></svg>Caustic Light</button><button><svg><use href="#l-port"/></svg>Portal Light</button><button><svg><use href="#l-amb"/></svg>Ambient Light</button><button class="two"><svg><use href="#l-ster"/></svg><span>Stereo<br>Camera</span></button><button><svg><use href="#l-vr"/></svg>VR Camera</button><button><svg><use href="#l-switch"/></svg>Switcher</button><button class="two"><svg><use href="#l-pad"/></svg><span>Gamepad<br>Camera</span></button>
    </div>
  </section>
</div>

<main class="panes">
  <div class="edge"></div>
  <section class="pane">
    <div class="ptabs"><button class="on tab1">Scene View <b>×</b></button><button>Geometry Spreadsheet <b>×</b></button><button class="add" aria-label="New tab"><svg class="i10"><use href="#plus"/></svg></button><span class="ctl"><svg class="i12"><use href="#sq"/></svg><svg class="i10"><use href="#down"/></svg></span></div>
    <div class="pathbar">
      <button class="ib" aria-label="Back"><svg class="i20"><use href="#back"/></svg></button><button class="ib" aria-label="Forward"><svg class="i20"><use href="#fwddim"/></svg></button>
      <div class="path"><button><svg class="i20"><use href="#clap"/></svg>obj</button><svg class="chev"><use href="#chev"/></svg><button><svg class="i18"><use href="#geo"/></svg>geo1</button><button class="pd" aria-label="Path history"><svg class="i8"><use href="#downdim"/></svg></button></div>
      <div class="viewbtns"><button class="ib" aria-label="Pin"><svg class="i18"><use href="#pin"/></svg></button><button class="ib" aria-label="Link"><svg class="i18"><use href="#target"/></svg></button><span class="gap8"></span><button class="ib m" aria-label="Shading"><svg class="i18"><use href="#cubeblue"/></svg></button><button class="ib m" aria-label="Objects"><svg class="i18"><use href="#balls"/></svg></button><button class="ib m" aria-label="View layout"><svg class="i18"><use href="#bigsq"/></svg></button></div>
    </div>
    <div class="selbar">
      <button class="strip top" aria-label="Collapse toolbar"></button>
      <button class="seltool m"><svg class="i20"><use href="#cursor"/></svg>Select</button>
      <div class="seltools"><button class="ib" aria-label="Points"><svg class="i18"><use href="#points"/></svg></button><button class="ib" aria-label="Edges"><svg class="i18"><use href="#edges"/></svg></button><button class="ib act" aria-label="Primitives"><svg class="i18"><use href="#prims"/></svg></button><button class="ib" aria-label="Vertices"><svg class="i18"><use href="#vert"/></svg></button><button class="ib" aria-label="Detail"><svg class="i18"><use href="#detail"/></svg></button><i class="vsep"></i><button class="ib act" aria-label="Box picking"><svg class="i18"><use href="#boxsel"/></svg></button><button class="ib" aria-label="Lasso"><svg class="i18"><use href="#lasso"/></svg></button><button class="ib" aria-label="Brush"><svg class="i18"><use href="#brush"/></svg></button><button class="ib" aria-label="Laser"><svg class="i18"><use href="#laser"/></svg></button><i class="vsep"></i><svg class="i10"><use href="#tri"/></svg><button class="ib m" aria-label="Selection rules"><svg class="i18"><use href="#hier"/></svg></button><button class="ib" aria-label="Help"><svg class="i16"><use href="#help"/></svg></button></div>
    </div>
    <div class="scene">
      <div class="lcol">
        <button class="hstrip left" aria-label="Collapse tools"></button>
        <div class="modes"><button class="r" aria-label="Objects"><svg class="i18"><use href="#conecube"/></svg></button><button class="r act" aria-label="Geometry"><svg class="i18"><use href="#prims"/></svg></button><button class="r" aria-label="Dynamics"><svg class="i18"><use href="#goldcube"/></svg></button></div>
        <hr>
        <button class="r act" aria-label="Select"><svg class="i20"><use href="#cursor"/></svg></button><button class="act" aria-label="Secure selection"><svg class="i16"><use href="#lockarrow"/></svg></button><button aria-label="Move"><svg class="i20"><use href="#move"/></svg></button><button aria-label="Rotate"><svg class="i20"><use href="#rotate"/></svg></button><button aria-label="Scale"><svg class="i20"><use href="#scale"/></svg></button><button aria-label="Pose"><svg class="i20"><use href="#pose"/></svg></button><button class="r" aria-label="Handles"><svg class="i20"><use href="#handles"/></svg></button>
        <hr>
        <button class="r" aria-label="Grid snap"><svg class="i20"><use href="#maggrid"/></svg></button><button class="r" aria-label="Curve snap"><svg class="i20"><use href="#magcurve"/></svg></button><button class="r" aria-label="Point snap"><svg class="i20"><use href="#magpt"/></svg></button><button class="r" aria-label="Multi snap"><svg class="i20"><use href="#magnet"/></svg></button>
        <hr>
        <button class="r" aria-label="Camera"><svg class="i20"><use href="#l-cam"/></svg></button><button aria-label="Render region"><svg class="i20"><use href="#render"/></svg></button><button class="r" aria-label="Flipbook"><svg class="i20"><use href="#flip"/></svg></button>
        <span class="grow"></span>
        <button class="r" aria-label="Snapshot"><svg class="i18"><use href="#snap"/></svg></button><button class="r" aria-label="Reel"><svg class="i20"><use href="#reel"/></svg></button>
      </div>
      <div class="viewport">
        <svg class="world" viewBox="0 0 328 804" preserveAspectRatio="none">
          <defs><mask id="fog"><rect y="248" width="328" height="556" fill="url(#gFade)"/></mask></defs>
          <g fill="none" stroke="#6f8189" stroke-width="1" mask="url(#fog)">
            <g opacity=".8">
            <path d="M0 414L88 433 218 462 328 486M0 366L158 389 253 403 328 414M0 531L150 583 328 648M24 803L56 748 150 583 260 390 328 273M0 397L16 390 130 335 220 290M0 313L328 349M0 297L328 326M0 287L328 309M0 282L328 298M0 277l328 13M0 273l328 10M0 270l328 8M0 267l328 6"/>
            <path d="M0 356L110 309 200 276M0 327L80 300 160 275M0 308L60 289 120 273M0 295L60 279M328 258L290 275M0 284l40-12M60 306l80-29M20 300l70-26"/>
            </g>
            <path stroke-width="2" opacity=".8" d="M0 335L225 363 272 368 328 375M0 493L138 390 190 349 245 312 291 278 328 258"/>
            <path opacity=".6" d="M0 264h328M0 261h328M0 258h328"/>
          </g>
          <ellipse cx="155" cy="359" rx="13" ry="3" fill="none" stroke="#8e7d82" stroke-width="2.500"/>
          <ellipse cx="209" cy="354" rx="8" ry="4" fill="none" stroke="#757d9c" stroke-width="3"/>
          <path stroke="#7d7a82" stroke-width="2" opacity=".7" d="M240 298h18M278 276h10"/>
          <path fill="#a09f9f" stroke="#b8a8a6" stroke-width=".6" d="M225 363l11-13 44 6-8 12-9 16-52-7z"/><path stroke="#667077" stroke-width="1.200" d="M225 363l47 5"/>
          <g fill="#1515e6"><circle cx="236" cy="350" r="2"/><circle cx="280" cy="356" r="2"/><circle cx="225" cy="363" r="2"/><circle cx="272" cy="368" r="2"/><circle cx="211" cy="377" r="2"/><circle cx="263" cy="384" r="2"/></g>
          <path fill="#545d63" d="M183 360c0-12 19-12 19 0l5 7-5 6v1c0 12-19 12-19 0z"/>
        </svg>
        <div class="cams"><button>Persp <svg class="i8"><use href="#down"/></svg></button><button>No cam <svg class="i8"><use href="#down"/></svg></button></div>
        <svg class="gnomon" viewBox="0 0 24 28"><path fill="none" stroke-width="1.200" stroke="#63d063" d="M2 23V8M1 1l2 4 3-5M3 5L2 8"/><path stroke="#d87a7a" d="M2 23l12-12"/><path fill="none" stroke="#6a70e0" stroke-width="1.200" d="M2 23l16 2M18 20h4l-4 5h4"/></svg>
        <span class="nc">Non-Commercial Edition</span>
        <p class="prompt">Select the geometry, then choose an operation to perform.</p>
        <p class="hint">Hold A or Ctrl+A or Shift+A or Ctrl+Shift+A to select full (MMB) or<br>partial (LMB) loops.<br>Hold H or Ctrl+H or Shift+H or Ctrl+Shift+H to select by flood fill.</p>
      </div>
      <div class="rcol">
        <button class="hstrip right" aria-label="Collapse display options"></button>
        <button class="r act" aria-label="Reference grid"><svg class="i18"><use href="#gridplane"/></svg></button><button class="r" aria-label="Construction plane"><svg class="i18"><use href="#refplane"/></svg></button><button aria-label="Lock camera"><svg class="i16"><use href="#padlock"/></svg></button><button aria-label="No lighting"><svg class="i18"><use href="#bulboff"/></svg></button><button class="r" aria-label="Flat lighting"><svg class="i18"><use href="#disks"/></svg></button><button class="r act" aria-label="Headlight"><svg class="i18"><use href="#bulb"/></svg></button><button class="r" aria-label="Normal lighting"><svg class="i18"><use href="#bulbplus"/></svg></button><button class="r" aria-label="Shadows"><svg class="i18"><use href="#bulbshadow"/></svg></button><button class="r act" aria-label="Materials"><svg class="i18"><use href="#checker"/></svg></button><button class="m" aria-label="Ghost"><svg class="i18"><use href="#specs"/></svg></button><button class="r" aria-label="Visibility"><svg class="i18"><use href="#specs2"/></svg></button>
        <hr>
        <button class="act" aria-label="Points"><svg class="i20"><use href="#dot"/></svg></button><button aria-label="Point normals"><svg class="i16"><use href="#norm"/></svg></button><button aria-label="Point trails"><svg class="i16"><use href="#pick"/></svg></button><button aria-label="Point numbers"><svg class="i16"><use href="#num"/></svg></button><button aria-label="Primitive normals"><svg class="i16"><use href="#primn"/></svg></button><button aria-label="Primitive numbers"><svg class="i16"><use href="#primnum"/></svg></button><button aria-label="Hulls"><svg class="i18"><use href="#bound"/></svg></button><button class="act" aria-label="Backfaces"><svg class="i18"><use href="#backf"/></svg></button><button class="r act" aria-label="UV texture"><svg class="i18"><use href="#uvcheck"/></svg></button><button aria-label="Profiles"><svg class="i16"><use href="#diam"/></svg></button><button aria-label="Curve hulls"><svg class="i16"><use href="#hull"/></svg></button><button aria-label="Origin"><svg class="i16"><use href="#axis"/></svg></button><button aria-label="Group list"><svg class="i18"><use href="#eqc"/></svg></button><button class="r act" aria-label="Background image"><svg class="i18"><use href="#photo"/></svg></button>
        <hr>
        <button class="r act" aria-label="Markers"><svg class="i18"><use href="#mappin"/></svg></button>
        <span class="grow"></span>
        <hr>
        <button aria-label="Info"><svg class="i18"><use href="#info"/></svg></button><button class="act" aria-label="Views"><svg class="i18"><use href="#quad"/></svg></button><button class="r" aria-label="Display options"><svg class="i18"><use href="#eye"/></svg></button>
      </div>
    </div>
  </section>
  <div class="vdiv"><i class="tl"></i><i class="grip"></i><i class="tr"></i></div>
  <section class="pane">
    <div class="ptabs"><button class="on tab2"><em>/obj/geo1</em> <b>×</b></button><button class="add" aria-label="New tab"><svg class="i10"><use href="#plus"/></svg></button><span class="ctl"><svg class="i12"><use href="#sq"/></svg><svg class="i10"><use href="#down"/></svg></span></div>
    <div class="pathbar">
      <button class="ib" aria-label="Back"><svg class="i20"><use href="#backdim"/></svg></button><button class="ib" aria-label="Forward"><svg class="i20"><use href="#fwddim"/></svg></button>
      <div class="path"><button><svg class="i20"><use href="#clap"/></svg>obj</button><svg class="chev"><use href="#chev"/></svg><button><svg class="i18"><use href="#geo"/></svg>geo1</button><button class="pd" aria-label="Path history"><svg class="i8"><use href="#downdim"/></svg></button></div>
      <button class="one">1</button><button class="ib" aria-label="Link"><svg class="i18"><use href="#target"/></svg></button>
    </div>
    <div class="netbar">
      <button class="strip top" aria-label="Collapse menu"></button>
      <nav class="menu"><button>Add</button><button>Edit</button><button>Go</button><button>View</button><button>Tools</button><button>Layout</button><button>Labs</button><button>Help</button></nav>
      <div class="netbtns"><button class="ib" aria-label="Settings"><svg class="i18"><use href="#tools"/></svg></button><button class="ib" aria-label="Tree"><svg class="i16"><use href="#tree"/></svg></button><button class="ib" aria-label="List"><svg class="i16"><use href="#list"/></svg></button><span class="gap8"></span><button class="ib" aria-label="Colors"><svg class="i16"><use href="#palette"/></svg></button><button class="ib" aria-label="Shapes"><svg class="i16"><use href="#listgrid"/></svg></button><span class="gap8"></span><button class="ib" aria-label="Network box"><svg class="i16"><use href="#netbox"/></svg></button><button class="ib" aria-label="Sticky note"><svg class="i16"><use href="#note"/></svg></button><button class="ib" aria-label="Image"><svg class="i16"><use href="#image"/></svg></button><button class="ib" aria-label="Asset"><svg class="i16"><use href="#crate"/></svg></button><span class="grow"></span><button class="ib" aria-label="Find"><svg class="i18"><use href="#search"/></svg></button><button class="ib" aria-label="Display"><svg class="i18"><use href="#eye"/></svg></button></div>
    </div>
    <div class="canvas">
      <span class="mark">Non-Commercial Edition</span><span class="ctx">Geometry</span>
      <div class="nbox" style="left:-60px;top:-60px;width:206px;height:377px"></div>
      <div class="nbox" style="left:-60px;top:361px;width:206px;height:97px"><header class="cut">_floor</header></div>
      <div class="nbox" style="left:190px;top:130px;width:900px;height:670px"><header>2nd</header></div>
      <div class="nbox in" style="left:204px;top:164px;width:251px;height:407px"><header>Valcony</header></div>
      <div class="nbox in" style="left:475px;top:464px;width:300px;height:76px"><header>2nd_wall</header></div>
      <svg class="wires" width="1200" height="820">
        <circle cx="272" cy="373" r="37" fill="#707c90"/><circle cx="272" cy="373" r="25" fill="#85788f"/>
        <g fill="none" stroke="#5f87bd" stroke-width="1.200">
          <path stroke="#5a8ccc" d="M0 177h204"/><path opacity=".4" d="M204 177h26"/><path opacity=".5" d="M266 185q6 4 6 10"/>
          <path opacity=".7" d="M272 230v18M272 283v16M272 453l-15 14M272 503v23"/>
          <path stroke="#6c86ae" d="M272 563q2 12 15 20l227 106q8 4 12 15M542 530v174M617 678l-42 11q-12 3-15 15M542 748v12M542 795v10"/>
        </g>
        <g fill="none" stroke="#8f9c78" stroke-width="1.200"><path opacity=".8" d="M272 335v20M257 390v28M287 391q3 20 20 21l310 27M307 412l168 52"/><path opacity=".5" d="M475 464l40 10q12 4 12 18"/></g>
        <g fill="#b1b1b1"><circle cx="272" cy="195" r="4"/><circle cx="272" cy="230" r="4"/><circle cx="272" cy="248" r="4"/><circle cx="272" cy="283" r="4"/><circle cx="272" cy="299" r="4"/><circle cx="272" cy="334" r="4"/><circle cx="272" cy="355" r="4"/><circle cx="257" cy="390" r="4" fill="#c4c4c4"/><circle cx="287" cy="390" r="4" fill="#c4c4c4"/><circle cx="257" cy="418" r="4"/><circle cx="287" cy="418" r="4"/><circle cx="272" cy="452" r="4"/><circle cx="257" cy="468" r="4"/><circle cx="287" cy="468" r="4"/><circle cx="272" cy="503" r="4"/><circle cx="272" cy="527" r="4"/><circle cx="272" cy="562" r="4"/><circle cx="527" cy="496" r="4"/><circle cx="557" cy="496" r="4"/><circle cx="542" cy="531" r="4"/><circle cx="542" cy="748" r="4"/><circle cx="542" cy="760" r="4"/><circle cx="542" cy="795" r="4"/><circle cx="-2" cy="404" r="4"/><circle cx="-2" cy="440" r="4"/></g>
      </svg>
      <div class="node" style="left:-96px;top:-17px"><svg class="nb"><use href="#nodebody"/></svg><span>sort1</span></div>
      <div class="node" style="left:-96px;top:31px"><svg class="nb"><use href="#nodebody"/></svg><span>grouprange1</span><small>random_two_points</small></div>
      <div class="node" style="left:-96px;top:79px"><svg class="nb"><use href="#nodebody"/></svg><span>grouppromote1</span></div>
      <div class="node" style="left:-96px;top:130px"><svg class="nb"><use href="#nodebody"/></svg><span>blast1</span></div>
      <span class="grp" style="left:2px;top:105px">to_to_prim</span><span class="grp" style="left:2px;top:156px">to_to_prim</span>
      <div class="node" style="left:-96px;top:205px"><svg class="nb"><use href="#nodebody"/></svg><span>polyextrude3</span></div>
      <div class="node" style="left:-96px;top:279px"><svg class="nb"><use href="#nodebody"/></svg><span>polyextrude4</span></div>
      <div class="node" style="left:-39px;top:410px"><svg class="nb"><use href="#nodebody"/></svg><svg class="ni"><use href="#n-xform"/></svg><span>transform2</span></div>
      <div class="node" style="left:234px;top:201px"><svg class="nb"><use href="#nodebody"/></svg><svg class="ni"><use href="#n-sort"/></svg><span>sort2</span></div>
      <div class="node" style="left:234px;top:254px"><svg class="nb"><use href="#nodebody"/></svg><svg class="ni"><use href="#n-range"/></svg><span>grouprange2</span><small>random_points_valcony</small></div>
      <div class="node" style="left:234px;top:305px"><svg class="nb"><use href="#nodebody"/></svg><svg class="ni"><use href="#n-promo"/></svg><span>grouppromote2</span><small>splitme</small></div>
      <div class="node sel" style="left:234px;top:361px"><svg class="nb"><use href="#nodebody"/></svg><svg class="ni"><use href="#splitic"/></svg><svg class="flag" viewBox="0 0 11 24"><path fill="#00a8f4" d="M3 1h4q4 0 4 4v14q0 4-4 4H0z"/></svg><span>split1</span><svg class="lk" viewBox="0 0 12 12"><path fill="#4e6158" d="M1 5h10v7H1z"/><path fill="none" stroke="#4e6158" stroke-width="1.500" d="M3 5V3c0-3 6-3 6 0v2"/></svg></div>
      <div class="node" style="left:234px;top:423px"><svg class="nb"><use href="#nodebody"/></svg><svg class="ni"><use href="#n-div"/></svg><span>divide1</span></div>
      <div class="node" style="left:234px;top:474px"><svg class="nb"><use href="#nodebody"/></svg><svg class="ni"><use href="#n-poly"/></svg><span>polyextrude5</span></div>
      <div class="node" style="left:234px;top:533px"><svg class="nb"><use href="#nodebody"/></svg><svg class="ni"><use href="#n-wire"/></svg><span>polywire1</span></div>
      <div class="node" style="left:505px;top:501px"><svg class="nb"><use href="#nodebody"/></svg><svg class="ni"><use href="#n-poly"/></svg><span>polyextrude6</span></div>
      <div class="node" style="left:505px;top:716px"><svg class="nb merge"><use href="#mergebody"/></svg><svg class="ni"><use href="#n-merge"/></svg><span>merge2</span><svg class="warn" viewBox="0 0 12 12"><circle cx="6" cy="6" r="6" fill="#c99b18"/><path stroke="#222" stroke-width="1.800" d="M6 2v5M6 8.500v1.800"/></svg></div>
      <div class="node" style="left:505px;top:765px"><svg class="nb"><use href="#nodebody"/></svg><svg class="ni"><use href="#n-xform"/></svg><span>transform3</span></div>
    </div>
    <div class="hbar"></div>
  </section>
  <div class="vdiv"><i class="tl"></i><i class="grip"></i><i class="tr"></i></div>
  <section class="pane">
    <div class="ptabs"><button class="on tab3"><em>split1</em> <b>×</b></button><button>Geometry Spreadsheet <b>×</b></button><button class="add" aria-label="New tab"><svg class="i10"><use href="#plus"/></svg></button><span class="ctl"><svg class="i12"><use href="#sq"/></svg><svg class="i10"><use href="#down"/></svg></span></div>
    <div class="pathbar">
      <button class="ib" aria-label="Back"><svg class="i20"><use href="#backdim"/></svg></button><button class="ib" aria-label="Forward"><svg class="i20"><use href="#fwddim"/></svg></button>
      <div class="path"><button><svg class="i20"><use href="#clap"/></svg>obj</button><svg class="chev"><use href="#chev"/></svg><button><svg class="i18"><use href="#geo"/></svg>geo1</button><button class="pd" aria-label="Path history"><svg class="i8"><use href="#downdim"/></svg></button></div>
      <button class="one">1</button><button class="ib" aria-label="Link"><svg class="i18"><use href="#target"/></svg></button>
    </div>
    <div class="opbar"><svg class="i16"><use href="#splitic"/></svg><label for="opname">Split</label><input id="opname" value="split1"><button class="ib m" aria-label="Gear menu"><svg class="i18"><use href="#gear"/></svg></button><button class="ib m" aria-label="Houdini Engine"><svg class="i18"><use href="#hbrand"/></svg></button><button class="ib" aria-label="Search"><svg class="i18"><use href="#search"/></svg></button><button class="ib" aria-label="Info"><svg class="i18"><use href="#info"/></svg></button><button class="ib" aria-label="Help"><svg class="i18"><use href="#help"/></svg></button></div>
    <form class="parms">
      <div class="parm"><label for="grp">Group</label><input id="grp" class="field" value="splitme"><button type="button" class="dd" aria-label="Choose group"><svg class="i10"><use href="#downdim"/></svg></button><button type="button" class="ib" aria-label="Reselect"><svg class="i16"><use href="#cursor"/></svg></button></div>
      <div class="parm"><label for="gtype">Group Type</label><div class="combo gt"><select id="gtype"><option>Guess from Group</option></select><span class="spin"><svg><use href="#updown"/></svg></span></div></div>
      <div class="parm chk"><span></span><input type="checkbox" id="inv"><label for="inv">Invert Selection</label></div>
      <div class="parm chk"><span></span><input type="checkbox" id="del"><label for="del">Delete Unused Groups</label></div>
    </form>
    <div class="hbar"></div>
  </section>
</main>

<footer class="playbar">
  <button class="strip bottom" aria-label="Collapse playbar"></button>
  <div class="transport">
    <div class="trow"><div class="bgroup big"><button aria-label="First frame"><svg><use href="#pb-first"/></svg></button><button aria-label="Play backward"><svg><use href="#pb-back"/></svg></button><button class="act" aria-label="Stop"><svg><use href="#pb-stop"/></svg></button><button aria-label="Play"><svg><use href="#pb-play"/></svg></button><button aria-label="Last frame"><svg><use href="#pb-last"/></svg></button></div><input class="frame" aria-label="Current frame" value="68"><div class="bgroup step"><button aria-label="Step back"><svg><use href="#pb-sb"/></svg></button><button aria-label="Step forward"><svg><use href="#pb-sf"/></svg></button></div></div>
    <div class="trow"><div class="bgroup mid"><button aria-label="Real time"><svg class="i20"><use href="#rt"/></svg></button><button aria-label="Audio"><svg class="i20"><use href="#audio"/></svg></button><button class="m" aria-label="Loop"><svg class="i20"><use href="#loop"/></svg></button><button aria-label="Playback options"><svg class="i20"><use href="#clock"/></svg></button></div><div class="bgroup dim"><button disabled aria-label="Previous key"><svg class="i18"><use href="#keyprev"/></svg></button><button disabled aria-label="Next key"><svg class="i18"><use href="#keynext"/></svg></button></div></div>
  </div>
  <div class="time">
    <div class="ruler">
      <svg viewBox="0 0 200 72" preserveAspectRatio="none"><path stroke="#9a9a9a" stroke-width="9" stroke-dasharray=".128 .872" d="M0 24.500h200"/><path stroke="#a8a8a8" stroke-width="15" stroke-dasharray=".128 23.872" d="M23 24.500h177"/><path stroke="#b0b0b0" stroke-width="1.500" d="M0 24.500h200"/></svg>
      <span style="left:0%">1</span><span style="left:11.5%">24</span><span style="left:23.5%">48</span><span style="left:35.5%">72</span><span style="left:47.5%">96</span><span style="left:59.5%">120</span><span style="left:71.5%">144</span><span style="left:83.5%">168</span><span style="left:95.5%">192</span>
      <b class="head" style="left:33.5%">68</b>
    </div>
    <div class="range"><input class="dimf" aria-label="Global start" value="1"><input aria-label="Range start" value="1"><div class="bar"></div><input aria-label="Range end" value="200"><input class="dimf" aria-label="Global end" value="200"></div>
  </div>
  <div class="keys">
    <button class="keyb" aria-label="Set key"><svg class="i20"><use href="#key"/></svg></button><button class="dd" aria-label="Key options"><svg class="i10"><use href="#downdim"/></svg></button>
    <div class="kicons"><button aria-label="Scoped channels"><svg class="i18"><use href="#scope"/></svg></button><button aria-label="Channel editor"><svg class="i18"><use href="#wave"/></svg></button></div>
    <div class="kcombos"><button class="chan">0 keys, 0/0 channels<svg class="i10 up"><use href="#downdim"/></svg></button><div class="combo"><select aria-label="Key channels"><option>Key All Channels</option></select><span class="spin"><svg><use href="#updown"/></svg></span></div></div>
  </div>
</footer>
<div class="status"><div class="sright"><button class="ib r" aria-label="Cook"><svg class="i20"><use href="#brain"/></svg></button><button class="ib" aria-label="Refresh"><svg class="i18"><use href="#refresh"/></svg></button><div class="combo"><select aria-label="Update mode"><option>Auto Update</option></select><span class="spin"><svg><use href="#updown"/></svg></span></div></div></div>
</div>
</body>
</html>
```
FILE: styles.css
```css
* { box-sizing: border-box; }
html, body { margin: 0; height: 100%; }
body { background: #2e2e2e; color: #c4c4c4; font: 11px/16px "Noto Sans CJK SC", sans-serif; overflow: hidden; }
button, input, select { font: inherit; color: inherit; background: none; border: 0; margin: 0; padding: 0; border-radius: 0; }
button { white-space: nowrap; }
select { appearance: none; }
svg { display: block; flex: none; }
.sprite { position: absolute; }
.i8 { width: 8px; height: 8px; }
.i10 { width: 10px; height: 10px; }
.i12 { width: 12px; height: 12px; }
.i16 { width: 16px; height: 16px; }
.i18 { width: 18px; height: 18px; }
.i20 { width: 20px; height: 20px; }
.grow { flex: 1; }
.gap8 { width: 8px; }
.window { height: 100vh; display: flex; flex-direction: column; border: 1px solid #3d6a90; border-top-color: #386488; }

.titlebar { height: 30px; flex: none; background: #245378; display: flex; align-items: center; padding: 0 2px 0 8px; gap: 5px; }
.titlebar h1 { margin: 0; font: 12px/20px "Noto Sans CJK KR", sans-serif; color: #fff; white-space: nowrap; flex: 1; }
.winbtns { display: flex; }
.winbtns button { width: 45px; height: 28px; display: grid; place-items: center; }
.winbtns svg { width: 12px; height: 12px; fill: none; stroke: #fff; stroke-width: 1.2; }

.strip { width: 7px; align-self: stretch; flex: none; background: #3e3e3e; border: solid #0a0a0a; border-width: 0 1px; position: relative; }
.strip::before, .hstrip::before { content: ""; position: absolute; border: 3px solid transparent; }
.strip.top::before { border-bottom: 6px solid #0a0a0a; border-top: 0; left: 0; top: 2px; }
.strip.bottom::before { border-top: 6px solid #0a0a0a; border-bottom: 0; left: 0; bottom: 2px; }

.menubar { height: 26px; flex: none; display: flex; align-items: center; background: linear-gradient(#3c3c3c, #323232); border-bottom: 1px solid #0a0a0a; font-size: 12px; padding-left: 1px; }
.menubar .strip { height: 100%; }
.menu { display: flex; flex: none; }
.menubar .menu { gap: 11px; padding-left: 8px; width: 305px; }
.combo { display: flex; align-items: center; height: 22px; background: linear-gradient(#555, #454545); }
.combo select { flex: 1; min-width: 0; height: 100%; padding: 0 5px; }
.spin { width: 24px; height: 100%; display: grid; place-items: center; background: #303030; flex: none; }
.spin svg { width: 8px; height: 16px; }
.desk, .take { padding-left: 5px; }
.desk { width: 128px; margin-right: 5px; }
.take { width: 171px; margin-left: auto; }
.menubar .take select { padding-left: 0; }
.helpbtn { width: 32px; }
.ib { display: grid; place-items: center; flex: none; position: relative; }
.act { background: linear-gradient(#58739a, #6a87ad); }
.m::after, .r::after { content: ""; position: absolute; border: 3px solid transparent; }
.m::after { border-top: 5px solid #999; border-bottom: 0; right: 0; bottom: 0; }
.r::after { border-left: 4px solid #999; border-right: 0; right: 1px; bottom: 3px; }
.act.r::after { border-left-color: #1c2c40; }

.shelves { flex: none; display: grid; grid-template-columns: 9px minmax(0, 1021fr) 11px minmax(0, 1010fr); height: 58px; border-bottom: 1px solid #0a0a0a; }
.shelves .strip { width: 8px; margin-left: 1px; }
.shelf { display: flex; flex-direction: column; min-width: 0; background: linear-gradient(#464646 18px, #343434); font-size: 9px; line-height: 13px; color: #bcbcbc; overflow: hidden; }
.stabs { height: 18px; display: flex; background: #2b2b2b; flex: none; }
.stabs button { padding: 0 6px; background: #2e2e2e; border: solid #0a0a0a; border-width: 0 1px 1px 0; border-top: 1px solid #555; flex: none; }
.stabs .on { background: #464646; border-bottom-color: #464646; }
.stabs .add { border: 0; background: none; display: grid; place-items: center; padding: 0 9px; }
.stabs .more { border: 0; background: none; margin-left: auto; display: grid; place-items: center; padding: 0 5px; }
.stools { flex: 1; display: flex; border-top: 1px solid #4c4c4c; }
.stools button { min-width: 41px; padding: 2px 4px 0; display: flex; flex-direction: column; align-items: center; justify-content: flex-start; flex: none; }
.stools svg { width: 20px; height: 20px; }
.stools .two { width: 64px; line-height: 9px; text-align: center; }
.stools .two svg { height: 18px; }
.vgrip { background: #444; border: solid #0a0a0a; border-width: 0 2px; display: grid; place-items: center; }
.vgrip i, .grip { width: 5px; height: 15px; background: radial-gradient(#111 1px, transparent 1px) 0 0 / 3px 3px; }

.panes { flex: 1; min-height: 0; display: grid; grid-template-columns: 7px minmax(0, 388fr) 7px minmax(0, 617fr) 7px minmax(0, 1025fr); }
.pane { display: flex; flex-direction: column; min-width: 0; min-height: 0; background: #3a3a3a; }
.edge { background: #3f3f3f; border-right: 1px solid #111; }
.vdiv { background: #454545; border: solid #161616; border-width: 0 2px; display: flex; flex-direction: column; align-items: center; justify-content: center; gap: 16px; }
.vdiv .grip { width: 3px; height: 20px; }
.tl, .tr { border: 3px solid transparent; }
.tl { border-right: 3px solid #aaa; border-left: 0; }
.tr { border-left: 3px solid #aaa; border-right: 0; }
.ptabs { height: 19px; flex: none; display: flex; background: #2c2c2c; font-size: 10px; line-height: 17px; }
.ptabs button { display: flex; align-items: center; gap: 7px; padding: 0 5px 0 6px; background: #303030; border-right: 1px solid #1c1c1c; }
.ptabs b { font-weight: 400; font-size: 11px; margin-left: auto; }
.ptabs .on { background: #484848; border: 0; }
.ptabs .tab1 { width: 83px; }
.ptabs .tab2 { width: 77px; }
.ptabs .tab3 { width: 59px; }
.ptabs .add { background: none; border: 0; padding: 0 7px; }
.ctl { margin-left: auto; display: flex; align-items: center; gap: 8px; padding-right: 4px; }
.pathbar { height: 34px; flex: none; display: flex; align-items: center; padding: 0 2px 0 1px; background: linear-gradient(#484848, #3a3a3a); border-bottom: 1px solid #0a0a0a; }
.pathbar > .ib { width: 24px; height: 24px; }
.path { flex: 1; min-width: 0; height: 25px; margin-left: 4px; display: flex; align-items: stretch; border: 1px solid #080808; border-top-width: 2px; background: linear-gradient(#4c4c4c, #404040); }
.path button { display: flex; align-items: center; gap: 4px; padding-left: 4px; }
.chev { width: 8px; height: 100%; margin-left: 6px; }
.path .pd { margin-left: auto; width: 18px; padding: 0; justify-content: center; background: #383838; }
.viewbtns { display: flex; padding: 0 2px 0 8px; gap: 3px; }
.viewbtns .gap8 { width: 4px; }
.viewbtns .ib { width: 21px; height: 24px; }
.one { width: 24px; height: 24px; border: 1px solid #bbb; border-radius: 50%; margin: 0 0 0 5px; }

.selbar { height: 32px; flex: none; display: flex; align-items: center; background: #2c2c2c; border-bottom: 1px solid #0a0a0a; padding-right: 2px; }
.selbar .strip, .netbar .strip { width: 9px; }
.seltool { position: relative; display: flex; align-items: center; gap: 3px; font-weight: 700; padding-left: 4px; height: 28px; width: 80px; }
.seltool.m::after { right: 50px; }
.seltools { flex: 1; display: flex; align-items: center; justify-content: space-between; padding-left: 1px; }
.seltools .ib { width: 21px; height: 27px; }
.vsep { width: 1px; height: 28px; background: #444; }

.scene { flex: 1; min-height: 0; display: grid; grid-template-columns: 34px minmax(0, 1fr) 26px; }
.lcol, .rcol { display: flex; flex-direction: column; align-items: center; min-height: 0; background: #3a3a3a; overflow: hidden; }
.lcol button, .rcol button { position: relative; display: grid; place-items: center; flex: none; }
.lcol > button { width: 27px; height: 28px; border: 1px solid #3a3a3a; }
.rcol > button { width: 24px; height: 25px; border: 1px solid #3a3a3a; }
.lcol > .hstrip, .rcol > .hstrip { width: 100%; height: 9px; background: #444; border: 1px solid #0a0a0a; border-top: 0; }
.rcol > .hstrip { margin-bottom: 2px; }
.hstrip.left::before { border-right: 6px solid #0a0a0a; border-left: 0; left: 1px; top: 1px; }
.hstrip.right::before { border-left: 6px solid #0a0a0a; border-right: 0; right: 1px; top: 1px; }
.lcol hr, .rcol hr { width: 28px; height: 1px; border: 0; background: #565656; margin: 4px 0 5px; flex: none; }
.modes { margin: 6px 0 4px; border: 1px solid #0a0a0a; background: linear-gradient(#505050, #404040); }
.modes button { width: 24px; height: 23px; }
.rcol hr { width: 24px; margin: 1px 0 2px; }
.rcol hr:nth-of-type(2) { margin: 4px 0 7px; }

.viewport { position: relative; overflow: hidden; background: linear-gradient(#68818b, #7c929b 31%, #93a4ab 50%, #a8b5b9 68%, #bcc7c7 96%); }
.world { width: 100%; height: 100%; position: absolute; inset: 0; }
.cams { position: absolute; top: 5px; right: 5px; display: flex; gap: 8px; }
.cams button { height: 20px; display: flex; align-items: center; gap: 2px; border: 1px solid #b6c0c4; border-radius: 10px; padding: 0 5px 0 6px; color: #eee; background: #788b93; }
.prompt, .hint { position: absolute; margin: 0; border-radius: 2px; background: rgba(194, 204, 204, .6); text-align: center; white-space: nowrap; }
.prompt { bottom: 57px; left: 3px; right: 3px; line-height: 21px; font-weight: 700; color: #2c2cdc; }
.hint { bottom: 0; left: 0; right: 0; padding: 0 2px 8px; line-height: 15px; color: #222; text-align: left; }
.gnomon { position: absolute; left: 19px; bottom: 16px; width: 24px; height: 28px; }
.nc { position: absolute; right: 12px; bottom: 7px; color: #bcbc4c; }

.netbar { height: 25px; flex: none; display: flex; align-items: center; background: linear-gradient(#3c3c3c, #303030); border-bottom: 1px solid #0a0a0a; font-size: 12px; }
.netbar .menu { gap: 13px; padding-left: 10px; }
.netbtns { flex: 1; display: flex; align-items: center; padding: 0 1px 0 9px; }
.netbtns .ib { width: 24px; height: 24px; }
.netbtns .ib + .ib { margin-left: 1px; }
.canvas { position: relative; flex: 1; min-height: 0; overflow: hidden; background: #303030; font-size: 15px; line-height: 24px; }
.mark { position: absolute; right: 200px; top: 8px; font-size: 19px; line-height: 32px; color: #444; }
.ctx { position: absolute; right: 12px; top: 11px; font-size: 23px; line-height: 34px; font-weight: 700; color: #565656; }
.nbox { position: absolute; border: 1px solid #6c6c6c; border-radius: 7px; background: #5a5a5a; color: #0c0c0c; overflow: hidden; }
.nbox header { height: 23px; line-height: 22px; background: #757575; border-bottom: 1px solid #808080; display: flex; align-items: center; gap: 7px; padding-left: 6px; }
.nbox header::before { content: ""; width: 13px; height: 2px; background: #0a0a0a; }
.nbox header.cut { padding-left: 41px; }
.nbox.in { background: #6f6f6f; border-color: #7c7c7c; }
.nbox.in header { background: #7e7e7e; }
.wires { position: absolute; left: 0; top: 0; }
.node { position: absolute; width: 76px; height: 24px; white-space: nowrap; color: #cacaca; }
.nb { width: 76px; height: 24px; }
.nb.merge { height: 38px; margin-top: -13px; }
.ni { position: absolute; left: 29px; top: 2px; width: 19px; height: 19px; }
.node span { position: absolute; left: 82px; top: 0; }
.node small { position: absolute; left: 82px; top: 25px; font-size: 13px; line-height: 22px; color: #719fdb; }
.grp { position: absolute; font-size: 13px; line-height: 22px; color: #719fdb; }
.sel .nb { outline: 2px solid #ffd500; border: 1px solid #111; border-radius: 4px; }
.flag { position: absolute; right: 1px; top: 1px; width: 10px; height: 22px; }
.lk, .warn { position: absolute; width: 12px; height: 12px; left: 86px; top: 23px; }
.warn { left: 84px; top: 22px; }
.hbar { height: 7px; flex: none; background: #444; border-top: 1px solid #777; border-bottom: 1px solid #555; margin-top: auto; }

.opbar { height: 27px; flex: none; display: flex; align-items: center; padding: 0 2px 0 6px; border-bottom: 1px solid #0a0a0a; }
.opbar label { font-weight: 700; padding: 0 5px; }
.opbar input, .field, .frame, .range input { font-family: "Noto Sans Mono CJK SC", "DejaVu Sans Mono", monospace; background: #131313; border: 1px solid #222; color: #ddd; padding: 0 2px; min-width: 0; }
.opbar input { flex: 1; height: 23px; font-size: 14px; margin-right: 1px; }
.opbar .ib { width: 24px; height: 24px; }
.parms { padding: 3px 7px 0 0; display: flex; flex-direction: column; }
.parm { display: flex; align-items: center; height: 23px; }
.parm > label:first-child, .parm > span { width: 139px; text-align: right; margin-right: 15px; flex: none; }
.field { flex: 1; height: 22px; font-weight: 700; font-size: 13px; color: #fff; }
.dd { width: 18px; height: 20px; display: grid; place-items: center; border: 1px solid #1a1a1a; background: #424242; flex: none; }
.parm .ib { width: 31px; }
.gt { width: 137px; }
.parm .combo { height: 21px; border: 1px solid #1c1c1c; border-bottom-width: 2px; }
.gt select { padding: 0 0 0 13px; }
.parm.chk { height: 21px; }
.parm:nth-child(2) { margin: 2px 0; }
.chk input { appearance: none; width: 14px; height: 14px; background: #121212; border: 2px solid #2a2a2a; margin-right: 7px; }

.playbar { height: 72px; flex: none; display: grid; grid-template-columns: 9px 226px minmax(0, 1fr) 252px; background: #2e2e2e; border-top: 1px solid #555; border-bottom: 1px solid #0a0a0a; }
.playbar .strip { width: 9px; }
.transport { padding: 6px 0 0 6px; display: flex; flex-direction: column; gap: 7px; }
.trow { display: flex; gap: 3px; align-items: center; }
.bgroup { display: flex; }
.bgroup button { display: grid; place-items: center; background: linear-gradient(#5a5a5a, #404040); border: 1px solid #161616; border-left-color: #606060; position: relative; }
.bgroup .act { background: linear-gradient(#58739a, #6a87ad); }
.big button { width: 27px; height: 29px; }
.big svg { width: 24px; height: 20px; }
.frame { width: 46px; height: 29px; font-size: 14px; }
.step button { width: 13px; height: 29px; }
.step svg { width: 12px; height: 20px; }
.mid button { width: 27px; height: 25px; }
.dim button { width: 23px; height: 25px; background: #333; border-color: #222; }
.time { display: flex; flex-direction: column; }
.ruler { position: relative; height: 44px; }
.ruler svg { position: absolute; left: 0; top: 0; width: 100%; height: 72px; }
.ruler span { position: absolute; top: 0; line-height: 14px; font-size: 10px; color: #909090; }
.head { position: absolute; top: 2px; width: 24px; margin-left: -12px; background: #111; border: 1px solid #e8e8e8; color: #eee; line-height: 15px; text-align: center; font-weight: 400; font-size: 12px; z-index: 1; }
.head::after { content: ""; position: absolute; left: 7px; top: 16px; border: 4px solid transparent; border-top: 5px solid #e8e8e8; border-bottom: 0; }
.range { display: flex; align-items: center; gap: 3px; }
.range input { width: 43px; height: 21px; font-size: 13px; }
.range .dimf { background: #222; }
.bar { flex: 1; height: 3px; background: #777; position: relative; }
.bar::before, .bar::after { content: ""; position: absolute; top: -5px; border: 7px solid transparent; border-width: 6px 0; }
.bar::before { left: -2px; border-left: 6px solid #aaa; }
.bar::after { right: -2px; border-right: 6px solid #aaa; }
.keys { display: flex; align-items: center; padding: 0 5px 3px 3px; }
.keyb { width: 41px; height: 41px; border: 1px solid #1a1a1a; border-radius: 50%; background: #353535; display: grid; place-items: center; }
.keys .dd { margin-left: -4px; background: #353535; }
.kicons, .kcombos { display: flex; flex-direction: column; gap: 5px; margin-left: 7px; }
.kicons button { width: 23px; height: 24px; border: 1px solid #161616; background: #4a4a4a; display: grid; place-items: center; }
.kcombos { flex: 1; margin-left: 5px; gap: 6px; }
.chan { height: 24px; display: flex; align-items: center; justify-content: space-between; padding: 0 6px 0 17px; background: linear-gradient(#555, #404040); border: 1px solid #161616; }
.up { transform: rotate(180deg); }
.kcombos .combo { height: 21px; border: 1px solid #161616; }
.kcombos select { padding-left: 13px; }
.status { height: 25px; flex: none; background: #1a1a1a; display: flex; justify-content: flex-end; }
.sright { background: #2e2e2e; display: flex; align-items: center; width: 172px; }
.sright .ib { width: 26px; height: 24px; }
.sright .combo { flex: 1; height: 24px; margin-left: 1px; }
.sright select { padding-left: 16px; }
```
